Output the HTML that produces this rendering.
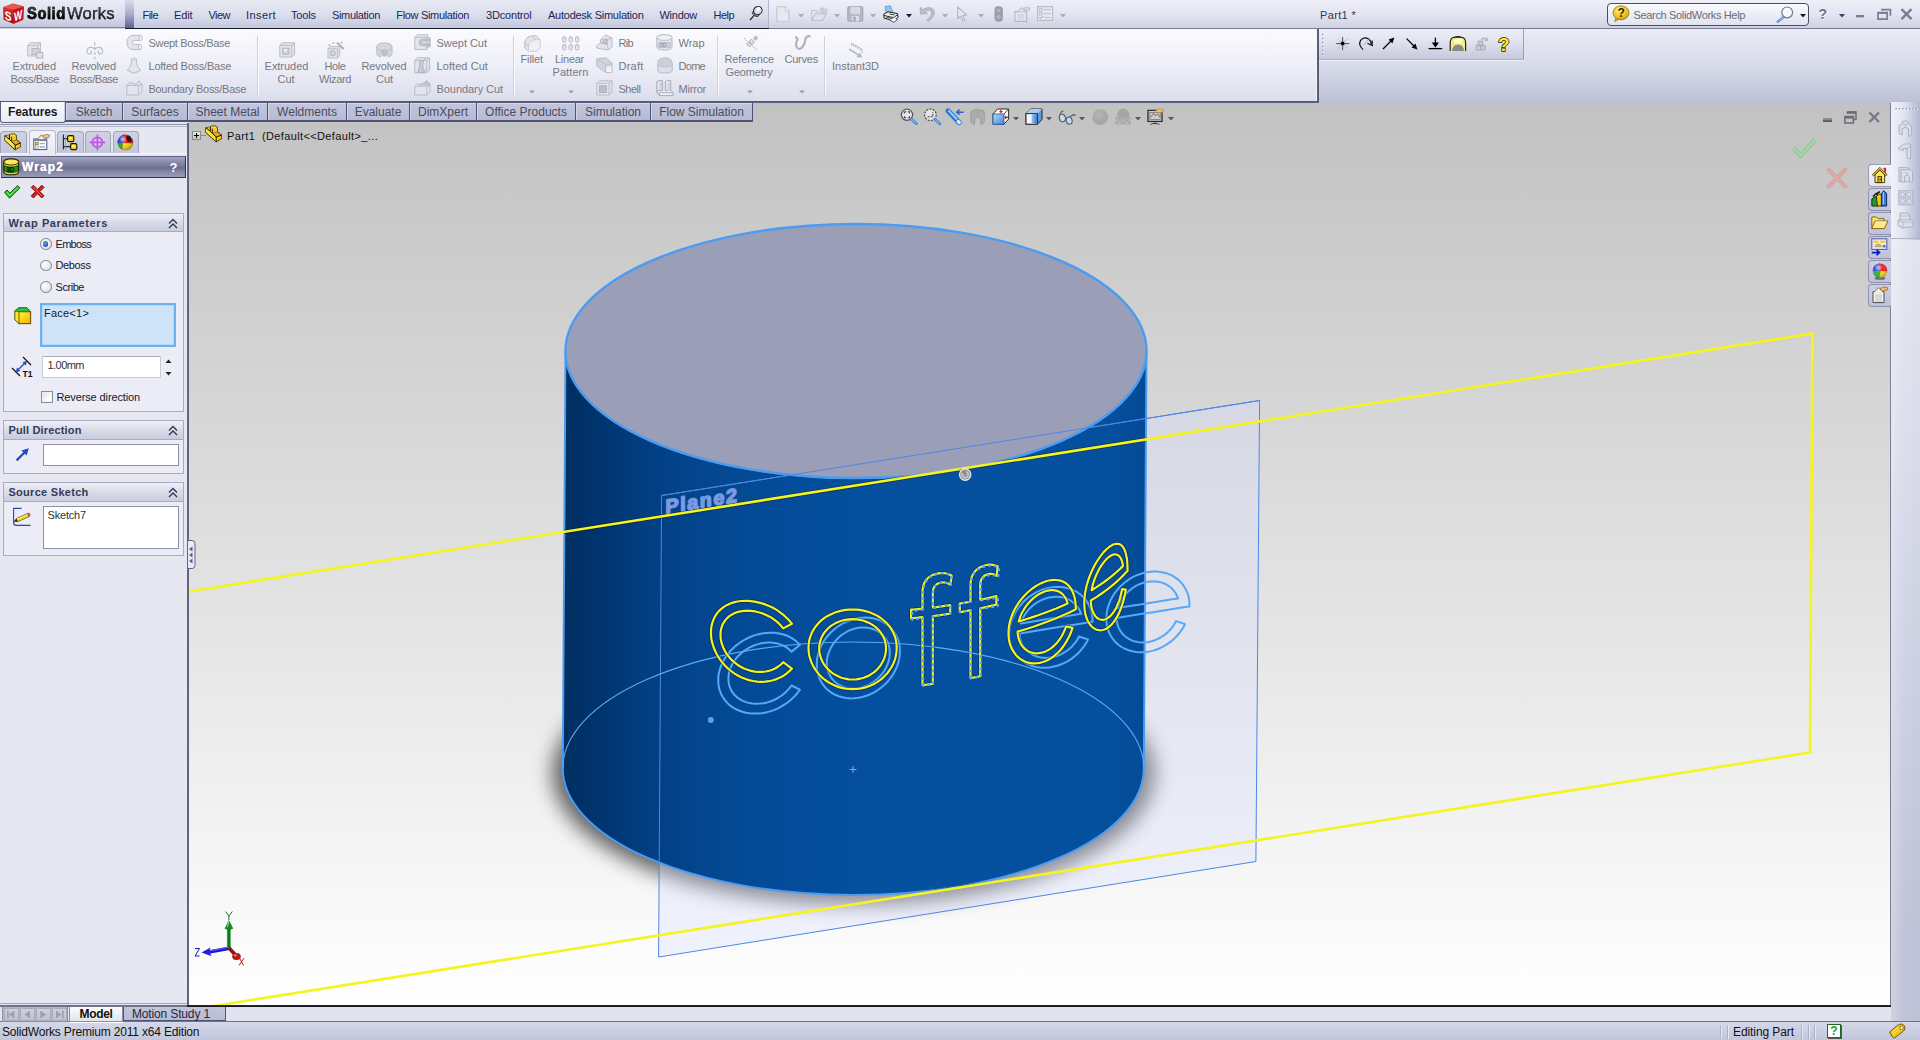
<!DOCTYPE html>
<html><head><meta charset="utf-8"><title>SolidWorks</title>
<style>
*{box-sizing:border-box;margin:0;padding:0}
html,body{width:1920px;height:1040px;overflow:hidden;background:#dfe1ee;font-family:"Liberation Sans",sans-serif;font-size:11px;color:#1c2450}
.a{position:absolute;white-space:nowrap}
#title{left:0;top:0;width:1920px;height:29px;background:linear-gradient(#eceef7,#e3e5f1 45%,#cfd2e3)}
#logo{left:0;top:0;width:125px;height:28px;background:linear-gradient(#e9ebf5,#dcdfed 50%,#c4c8dc);border-bottom:1px solid #7f8298}
#sep{left:125px;top:0;width:9px;height:28px;background:linear-gradient(#d9dbeb,#a9accb 50%,#5f6291)}
#menu{left:134px;top:0;width:635px;height:29px;background:linear-gradient(#e8eaf4,#dcdfed 50%,#c3c7db);border-bottom:1px solid #14162a;border-right:1px solid #b4b7cc}
#menuline{left:125px;top:28px;width:644px;height:1px;background:#14162a}
.mi{top:8px;font-size:11px;color:#1b2455;letter-spacing:-0.1px}
#titleR{left:769px;top:0;width:1151px;height:29px;background:linear-gradient(#eeeff7,#e3e5f1 50%,#cfd2e3);border-bottom:1px solid #777a92}
#cmd{left:0;top:29px;width:1319px;height:73px;background:linear-gradient(#fbfbfe,#f1f2f9 40%,#dcdeed);border-right:2px solid #5c5f73;border-bottom:1px solid #565970;box-shadow:inset -1px 0 0 #f4f5fa}
#cmdR{left:1319px;top:29px;width:601px;height:74px;background:linear-gradient(#e9ebf5,#d9dceb 45%,#bcc0d6)}
.ct{font-size:11px;color:#7a7c86;text-align:center;line-height:13px}
.cs{font-size:11px;color:#70727c}
.vsep{top:36px;width:1px;height:60px;background:#c9cbd9;border-right:1px solid #fff}
#tabrow{left:65px;top:102px;width:1254px;height:1px;background:#55586f}
#tabrowL{left:0;top:103px;width:189px;height:21px;background:#e3e5f0}
.tab{top:102px;height:20px;background:linear-gradient(#c6c9dd,#b4b8d0);border:1px solid #4d5177;border-left:none;font-size:12px;color:#4c4e66;text-align:center;line-height:18px}
#tabF{left:1px;top:102px;width:65px;height:22px;background:linear-gradient(#f4f5fa,#e6e8f2);border:1px solid #6a6d8c;border-top:none;font-weight:bold;font-size:12px;color:#222;text-align:center;line-height:19px;border-radius:0 0 2px 2px}
#left{left:0;top:124px;width:187px;height:882px;background:#e6e7f1}
#split{left:187px;top:123px;width:2px;height:883px;background:#62657f}
#vp{left:189px;top:103px}
#right{left:1891px;top:102px;width:29px;height:920px;background:linear-gradient(90deg,#eef0f8,#dde0ee 50%,#b9bdd3)}
#btabs{left:0;top:1006px;width:1891px;height:16px;background:#e1e3ee}
#status{left:0;top:1021px;width:1920px;height:19px;background:linear-gradient(#d5d8e8,#c2c6db);border-top:1px solid #6f7289;font-size:12px;color:#111}
</style></head><body>
<div id="title" class="a"></div>
<div id="titleR" class="a"></div>
<div id="logo" class="a"></div>
<div id="sep" class="a"></div>
<div id="menu" class="a"></div>
<div id="menuline" class="a"></div>
<div class="a" style="left:142.5px;top:9.5px;font-size:11px;line-height:11px;color:#1b2558;letter-spacing:-0.56px;">File</div>
<div class="a" style="left:174.0px;top:9.5px;font-size:11px;line-height:11px;color:#1b2558;letter-spacing:-0.12px;">Edit</div>
<div class="a" style="left:208.5px;top:9.5px;font-size:11px;line-height:11px;color:#1b2558;letter-spacing:-0.54px;">View</div>
<div class="a" style="left:246.0px;top:9.5px;font-size:11px;line-height:11px;color:#1b2558;letter-spacing:0.43px;">Insert</div>
<div class="a" style="left:291.0px;top:9.5px;font-size:11px;line-height:11px;color:#1b2558;letter-spacing:-0.14px;">Tools</div>
<div class="a" style="left:332.0px;top:9.5px;font-size:11px;line-height:11px;color:#1b2558;letter-spacing:-0.34px;">Simulation</div>
<div class="a" style="left:396.3px;top:9.5px;font-size:11px;line-height:11px;color:#1b2558;letter-spacing:-0.33px;">Flow Simulation</div>
<div class="a" style="left:486.0px;top:9.5px;font-size:11px;line-height:11px;color:#1b2558;letter-spacing:-0.18px;">3Dcontrol</div>
<div class="a" style="left:548.0px;top:9.5px;font-size:11px;line-height:11px;color:#1b2558;letter-spacing:-0.25px;">Autodesk Simulation</div>
<div class="a" style="left:659.5px;top:9.5px;font-size:11px;line-height:11px;color:#1b2558;letter-spacing:-0.27px;">Window</div>
<div class="a" style="left:713.5px;top:9.5px;font-size:11px;line-height:11px;color:#1b2558;letter-spacing:-0.53px;">Help</div>
<div class="a" style="left:1320.0px;top:9.5px;font-size:11px;line-height:11px;color:#33364a;letter-spacing:0.34px;">Part1 *</div>
<div class="a" style="left:27px;top:4.4px;font-size:17px;line-height:19px;font-weight:bold;letter-spacing:0.6px;transform:scaleX(0.87);transform-origin:0 0;background:linear-gradient(#5a5a5a,#000 70%);-webkit-background-clip:text;background-clip:text;color:transparent;-webkit-text-stroke:0.5px #111">Solid</div>
<div class="a" style="left:67px;top:4.4px;font-size:17px;line-height:19px;letter-spacing:0.2px;transform:scaleX(0.98);transform-origin:0 0;background:linear-gradient(#666,#111 75%);-webkit-background-clip:text;background-clip:text;color:transparent;-webkit-text-stroke:0.25px #222">Works</div>
<div class="a" style="left:1607px;top:3px;width:202px;height:23px;border:1px solid #4b4d5e;border-radius:4px;background:linear-gradient(#fbfbfd,#eceef6 50%,#e1e4f0)"></div>
<div class="a" style="left:1633.5px;top:9.6px;font-size:11px;line-height:11px;color:#6a6c78;letter-spacing:-0.34px;">Search SolidWorks Help</div>
<svg class="a" style="left:3px;top:3px;overflow:visible" width="21" height="21" viewBox="0 0 21 21" ><defs><linearGradient id="lg1" x1="0" y1="0" x2="0" y2="1"><stop offset="0" stop-color="#e8322c"/><stop offset="1" stop-color="#a50f0f"/></linearGradient></defs>
<path d="M0.5 4.4 L10 0.9 L20.5 3.8 L20 16.5 L10.5 20.5 L1 16.5Z" fill="url(#lg1)" stroke="#8a1010" stroke-width="0.6"/>
<path d="M0.5 4.4 L10 0.9 L20.5 3.8 L10.5 6.8Z" fill="#f0544e"/>
<path d="M10.5 6.8 L20.5 3.8 L20 16.5 L10.5 20.5Z" fill="#c01616"/>
<text x="0" y="0" font-family="Liberation Sans" font-weight="bold" font-size="12.5" fill="#fff" transform="matrix(0.82 0.27 0 1 1.7 16.2)">S</text>
<text x="0" y="0" font-family="Liberation Sans" font-weight="bold" font-size="12.5" fill="#fff" transform="matrix(0.7 -0.27 0 1 10.9 18.6)">W</text></svg>
<svg class="a" style="left:749px;top:5px;overflow:visible" width="14" height="16" viewBox="0 0 14 16" ><path d="M1 15 L5.6 9.8" stroke="#222" stroke-width="1.2"/><path d="M3.2 7.6 Q4.6 11.6 9 11.4 L10.4 9.4 L5 5.4Z" fill="#b9bac2" stroke="#26262e" stroke-width="1"/><ellipse cx="8.8" cy="5.6" rx="4.4" ry="4" fill="#dcdde3" stroke="#26262e" stroke-width="1.1" transform="rotate(-35 8.8 5.6)"/><ellipse cx="9.6" cy="4.2" rx="2.2" ry="1.6" fill="#fff" transform="rotate(-35 9.6 4.2)"/></svg>
<svg class="a" style="left:776px;top:6px;overflow:visible" width="14" height="16" viewBox="0 0 14 16" ><path d="M0.8 0.8h8.2l4 4v10.4h-12.2z" fill="#e8e9f0" stroke="#c3c5d2" stroke-width="1.1"/><path d="M9 0.8v4h4" fill="#f6f6fa" stroke="#c3c5d2" stroke-width="1"/></svg>
<svg class="a" style="left:798px;top:14px;overflow:visible" width="6" height="4" viewBox="0 0 6 4" ><path d="M0 0h6l-3 3.4z" fill="#a9abba"/></svg>
<svg class="a" style="left:811px;top:5px;overflow:visible" width="17" height="17" viewBox="0 0 17 17" ><path d="M0.8 15.5V5.5h4l1.5 1.5h5v2" fill="#e8e9f0" stroke="#bfc1cf" stroke-width="1.1"/><path d="M0.8 15.5L4 8.7h11.3l-3.6 6.8z" fill="#dfe0ea" stroke="#bfc1cf" stroke-width="1.1"/><path d="M8.5 4.5q3-3.5 6 0.2l1.5-1v4.6h-4.6l1.6-1.6q-1.8-2.4-3.6-1" fill="#d0d2de" stroke="#bfc1cf" stroke-width="0.8"/></svg>
<svg class="a" style="left:834px;top:14px;overflow:visible" width="6" height="4" viewBox="0 0 6 4" ><path d="M0 0h6l-3 3.4z" fill="#a9abba"/></svg>
<svg class="a" style="left:847px;top:6px;overflow:visible" width="17" height="16" viewBox="0 0 17 16" ><rect x="0.8" y="0.8" width="15" height="14.4" rx="1" fill="#b5b7c4" stroke="#9fa1b0" stroke-width="1"/><rect x="3.6" y="1.2" width="9.4" height="6.6" fill="#e4e5ec"/><path d="M4.5 3h7.6M4.5 4.8h7.6M4.5 6.4h7.6" stroke="#c3c5d0" stroke-width="0.7"/><rect x="4.8" y="9.8" width="7.2" height="5.4" fill="#dcdde6"/><rect x="6.2" y="10.8" width="2.6" height="4.4" fill="#a7a9b7"/></svg>
<svg class="a" style="left:870px;top:14px;overflow:visible" width="6" height="4" viewBox="0 0 6 4" ><path d="M0 0h6l-3 3.4z" fill="#a9abba"/></svg>
<svg class="a" style="left:883px;top:5px;overflow:visible" width="16" height="18" viewBox="0 0 16 18" ><path d="M3 7.5 L2 1.5 L7.6 0.8 L9.8 7" fill="#8fc3f0" stroke="#5a9bd8" stroke-width="0.8"/><path d="M0.8 9.2 L5 6.8 L14.4 8.6 L15.2 12.2 L10.6 15.6 L1.2 13.2Z" fill="#f2f2f2" stroke="#1a1a1a" stroke-width="1"/><path d="M1 10.5 L10.5 12.6 L15 9.4" fill="none" stroke="#1a1a1a" stroke-width="0.9"/><path d="M3.4 12.2 L9.6 13.6" stroke="#555" stroke-width="1.1"/><path d="M6.5 9 l5 1" stroke="#444" stroke-width="1.2"/><path d="M6 14.6 L10.8 17.2 L14.6 14.6 L13 13.6" fill="#fff" stroke="#333" stroke-width="0.8"/></svg>
<svg class="a" style="left:906px;top:14px;overflow:visible" width="6" height="4" viewBox="0 0 6 4" ><path d="M0 0h6l-3 3.4z" fill="#1a1c3e"/></svg>
<svg class="a" style="left:919px;top:6px;overflow:visible" width="17" height="16" viewBox="0 0 17 16" ><path d="M1 1.2 L1.6 8.2 L8.6 7.6 L6.2 5.6 Q10.5 2.6 12.2 6.2 Q13.2 9.6 7.6 14.2 L9.4 15.6 Q17 9.8 15 4.6 Q12 -1.2 3.6 3.6Z" fill="#bcbecb" stroke="#a9abb9" stroke-width="0.8"/></svg>
<svg class="a" style="left:942px;top:14px;overflow:visible" width="6" height="4" viewBox="0 0 6 4" ><path d="M0 0h6l-3 3.4z" fill="#a9abba"/></svg>
<svg class="a" style="left:957px;top:6px;overflow:visible" width="11" height="16" viewBox="0 0 11 16" ><path d="M0.8 0.8 L0.8 12.6 L3.6 10 L6 15.2 L8 14.3 L5.6 9.2 L9.6 9.2Z" fill="#e9eaf1" stroke="#b0b2c1" stroke-width="1.1" stroke-linejoin="round"/></svg>
<svg class="a" style="left:978px;top:14px;overflow:visible" width="6" height="4" viewBox="0 0 6 4" ><path d="M0 0h6l-3 3.4z" fill="#a9abba"/></svg>
<svg class="a" style="left:994px;top:6px;overflow:visible" width="10" height="16" viewBox="0 0 10 16" ><rect x="0.5" y="0.3" width="8.4" height="15.4" rx="3.6" fill="#9b9da9"/><circle cx="4.7" cy="4.4" r="2" fill="#b3b5c0"/><circle cx="4.7" cy="10.8" r="2" fill="#b3b5c0"/></svg>
<svg class="a" style="left:1014px;top:6px;overflow:visible" width="17" height="16" viewBox="0 0 17 16" ><path d="M1 5.6h11.6v9.8H1z" fill="#e5e6ee" stroke="#b3b5c3" stroke-width="1.1"/><path d="M3.2 9h7.2M3.2 11h7.2M3.2 13h7.2" stroke="#c0c2ce" stroke-width="0.8"/><path d="M4 6 L7.6 1.4 L11.6 5.6" fill="#d9dae3" stroke="#b3b5c3" stroke-width="0.9"/><path d="M9.5 2.4 q3-2.6 6.4-0.6 l-0.4 2.6 q-2-1-3.6 0.6z" fill="#d2d3de" stroke="#b9bbc8" stroke-width="0.7"/></svg>
<svg class="a" style="left:1037px;top:6px;overflow:visible" width="17" height="15" viewBox="0 0 17 15" ><rect x="0.6" y="0.6" width="15" height="13.8" fill="#e6e7ef" stroke="#b7b9c6" stroke-width="1.1"/><rect x="2.6" y="2.6" width="2.4" height="2.4" fill="none" stroke="#b7b9c6" stroke-width="0.8"/><rect x="2.6" y="6.6" width="2.4" height="2.4" fill="none" stroke="#b7b9c6" stroke-width="0.8"/><path d="M6.6 3.6h7M6.6 7.8h7M7.6 11.6h6" stroke="#b7b9c6" stroke-width="0.9"/><path d="M2.4 11l1.4 1.5 2.6-2.6" fill="none" stroke="#9d9fae" stroke-width="1"/></svg>
<svg class="a" style="left:1060px;top:14px;overflow:visible" width="6" height="4" viewBox="0 0 6 4" ><path d="M0 0h6l-3 3.4z" fill="#a9abba"/></svg>
<svg class="a" style="left:1612px;top:5px;overflow:visible" width="18" height="18" viewBox="0 0 18 18" ><defs><radialGradient id="qg" cx="0.4" cy="0.3" r="0.8"><stop offset="0" stop-color="#fff27a"/><stop offset="0.6" stop-color="#f1c01e"/><stop offset="1" stop-color="#c98f0a"/></radialGradient></defs>
<path d="M3.6 13.2 L2.6 16.6 L6.8 14.4" fill="#e0a814" stroke="#8a6208" stroke-width="0.6"/><ellipse cx="9" cy="7.8" rx="8" ry="7" fill="url(#qg)" stroke="#9a6f08" stroke-width="0.8"/>
<text x="5.4" y="12.2" font-family="Liberation Sans" font-weight="bold" font-size="12" fill="#2a2410">?</text></svg>
<svg class="a" style="left:1776px;top:6px;overflow:visible" width="19" height="17" viewBox="0 0 19 17" ><path d="M8 10.8 L2 15.6" stroke="#5a8fc8" stroke-width="2.6" stroke-linecap="round"/><path d="M8 10.8 L2.4 15.2" stroke="#a9cdf0" stroke-width="0.9"/><circle cx="11.2" cy="6.4" r="5.4" fill="#f4f7fc" stroke="#6f7a8c" stroke-width="1.2"/><path d="M7.6 5.6 a3.8 3.8 0 0 1 5.2-2.6" fill="none" stroke="#fff" stroke-width="1.4"/></svg>
<svg class="a" style="left:1800px;top:14px;overflow:visible" width="6" height="4" viewBox="0 0 6 4" ><path d="M0 0h6l-3 3.4z" fill="#16182e"/></svg>
<div class="a" style="left:1818.5px;top:6px;font-size:14px;line-height:16px;font-weight:bold;color:#71738a;text-shadow:0.5px 0.5px 0 #fff">?</div>
<svg class="a" style="left:1839px;top:13.5px;overflow:visible" width="6" height="4" viewBox="0 0 6 4" ><path d="M0 0h6l-3 3.4z" fill="#3c3e5a"/></svg>
<svg class="a" style="left:1855px;top:8px;overflow:visible" width="60" height="14" viewBox="0 0 60 14" ><g fill="none" stroke="#7b7d95" stroke-width="2"><path d="M1 8.2h8" stroke-width="2.4"/><path d="M26 1.6h9.4v6.2 M23 4.6h9.2v6.6h-9.2z M23 5.2h9.2" stroke-width="1.7"/><path d="M46.5 1.2 l10 10 M56.5 1.2 l-10 10" stroke-width="2.4"/></g></svg>
<div id="cmd" class="a"></div>
<div id="cmdR" class="a"></div>
<div class="a" style="left:12.5px;top:60.9px;font-size:11px;line-height:11px;color:#777982;letter-spacing:-0.07px;">Extruded</div>
<div class="a" style="left:10.5px;top:73.9px;font-size:11px;line-height:11px;color:#777982;letter-spacing:-0.45px;">Boss/Base</div>
<div class="a" style="left:71.5px;top:60.9px;font-size:11px;line-height:11px;color:#777982;letter-spacing:-0.17px;">Revolved</div>
<div class="a" style="left:69.5px;top:73.9px;font-size:11px;line-height:11px;color:#777982;letter-spacing:-0.45px;">Boss/Base</div>
<div class="a" style="left:264.6px;top:60.9px;font-size:11px;line-height:11px;color:#777982;letter-spacing:-0.04px;">Extruded</div>
<div class="a" style="left:277.5px;top:73.9px;font-size:11px;line-height:11px;color:#777982;letter-spacing:-0.04px;">Cut</div>
<div class="a" style="left:324.5px;top:60.9px;font-size:11px;line-height:11px;color:#777982;letter-spacing:-0.41px;">Hole</div>
<div class="a" style="left:319.0px;top:73.9px;font-size:11px;line-height:11px;color:#777982;letter-spacing:-0.37px;">Wizard</div>
<div class="a" style="left:361.5px;top:60.9px;font-size:11px;line-height:11px;color:#777982;letter-spacing:-0.11px;">Revolved</div>
<div class="a" style="left:376.0px;top:73.9px;font-size:11px;line-height:11px;color:#777982;letter-spacing:-0.04px;">Cut</div>
<div class="a" style="left:520.5px;top:54.2px;font-size:11px;line-height:11px;color:#777982;letter-spacing:-0.12px;">Fillet</div>
<div class="a" style="left:555.0px;top:54.2px;font-size:11px;line-height:11px;color:#777982;letter-spacing:-0.26px;">Linear</div>
<div class="a" style="left:552.5px;top:67.0px;font-size:11px;line-height:11px;color:#777982;letter-spacing:0.08px;">Pattern</div>
<div class="a" style="left:724.5px;top:54.2px;font-size:11px;line-height:11px;color:#777982;letter-spacing:-0.14px;">Reference</div>
<div class="a" style="left:725.5px;top:67.0px;font-size:11px;line-height:11px;color:#777982;letter-spacing:-0.16px;">Geometry</div>
<div class="a" style="left:784.5px;top:54.2px;font-size:11px;line-height:11px;color:#777982;letter-spacing:-0.22px;">Curves</div>
<div class="a" style="left:832.0px;top:61.1px;font-size:11px;line-height:11px;color:#777982;letter-spacing:-0.01px;">Instant3D</div>
<div class="a" style="left:148.5px;top:37.9px;font-size:11px;line-height:11px;color:#777982;letter-spacing:-0.31px;">Swept Boss/Base</div>
<div class="a" style="left:148.5px;top:60.9px;font-size:11px;line-height:11px;color:#777982;letter-spacing:-0.23px;">Lofted Boss/Base</div>
<div class="a" style="left:148.5px;top:83.9px;font-size:11px;line-height:11px;color:#777982;letter-spacing:-0.29px;">Boundary Boss/Base</div>
<div class="a" style="left:436.5px;top:37.9px;font-size:11px;line-height:11px;color:#777982;letter-spacing:-0.03px;">Swept Cut</div>
<div class="a" style="left:436.5px;top:60.9px;font-size:11px;line-height:11px;color:#777982;letter-spacing:0.07px;">Lofted Cut</div>
<div class="a" style="left:436.5px;top:83.9px;font-size:11px;line-height:11px;color:#777982;letter-spacing:-0.06px;">Boundary Cut</div>
<div class="a" style="left:618.5px;top:37.9px;font-size:11px;line-height:11px;color:#777982;letter-spacing:-0.67px;">Rib</div>
<div class="a" style="left:618.5px;top:60.9px;font-size:11px;line-height:11px;color:#777982;letter-spacing:0.23px;">Draft</div>
<div class="a" style="left:618.5px;top:83.9px;font-size:11px;line-height:11px;color:#777982;letter-spacing:-0.49px;">Shell</div>
<div class="a" style="left:678.5px;top:37.9px;font-size:11px;line-height:11px;color:#777982;letter-spacing:-0.02px;">Wrap</div>
<div class="a" style="left:678.5px;top:60.9px;font-size:11px;line-height:11px;color:#777982;letter-spacing:-0.71px;">Dome</div>
<div class="a" style="left:678.5px;top:83.9px;font-size:11px;line-height:11px;color:#777982;letter-spacing:-0.20px;">Mirror</div>
<div class="a" style="left:257px;top:36px;width:2px;height:60px;background:linear-gradient(90deg,#cfd1de 50%,#fbfbfe 50%)"></div>
<div class="a" style="left:513px;top:36px;width:2px;height:60px;background:linear-gradient(90deg,#cfd1de 50%,#fbfbfe 50%)"></div>
<div class="a" style="left:717px;top:36px;width:2px;height:60px;background:linear-gradient(90deg,#cfd1de 50%,#fbfbfe 50%)"></div>
<div class="a" style="left:824px;top:36px;width:2px;height:60px;background:linear-gradient(90deg,#cfd1de 50%,#fbfbfe 50%)"></div>
<svg class="a" style="left:529px;top:90px" width="6" height="4" viewBox="0 0 6 4"><path d="M0 0.5h6l-3 3z" fill="#9b9da8"/></svg>
<svg class="a" style="left:568px;top:90px" width="6" height="4" viewBox="0 0 6 4"><path d="M0 0.5h6l-3 3z" fill="#9b9da8"/></svg>
<svg class="a" style="left:747px;top:90px" width="6" height="4" viewBox="0 0 6 4"><path d="M0 0.5h6l-3 3z" fill="#9b9da8"/></svg>
<svg class="a" style="left:799px;top:90px" width="6" height="4" viewBox="0 0 6 4"><path d="M0 0.5h6l-3 3z" fill="#9b9da8"/></svg>
<svg class="a" style="left:27px;top:42px;overflow:visible" width="17" height="17" viewBox="0 0 17 17" ><path d="M0.8 3.4 L3.6 0.8 H13.6 V11.4 L10.8 14 H0.8Z" fill="#e4e5ec" stroke="#b9bbc7" stroke-width="1"/><path d="M0.8 3.4H10.8V14M10.8 3.4L13.6 0.8" fill="none" stroke="#b9bbc7" stroke-width="1"/><rect x="5" y="6.6" width="7" height="6" fill="#d3d4de" stroke="#aeb0bd" stroke-width="0.9"/><rect x="9.4" y="10.4" width="6.4" height="5.6" fill="#dddee6" stroke="#aeb0bd" stroke-width="0.9"/></svg>
<svg class="a" style="left:86px;top:42px;overflow:visible" width="18" height="18" viewBox="0 0 18 18" ><path d="M8.8 0.5v3M8.8 5v3.4M8.8 10v3M8.8 14.6v2.6" stroke="#a9abb8" stroke-width="1"/><path d="M1 9.6 Q1 5.4 5 5.4 Q7 5.4 8.8 7 Q10.6 5.4 12.6 5.4 Q16.6 5.4 16.6 9.6 Q16.6 12 14 12 Q12 12 12 10 Q12 8.8 13.4 8.8" fill="none" stroke="#b9bbc7" stroke-width="1.1"/><path d="M1 9.6 Q1 12 3.6 12 Q5.6 12 5.6 10 Q5.6 8.8 4.2 8.8" fill="none" stroke="#b9bbc7" stroke-width="1.1"/></svg>
<svg class="a" style="left:126px;top:34px;overflow:visible" width="17" height="17" viewBox="0 0 17 17" ><path d="M15 1.4 H8 Q1 1.4 1 8.4 Q1 15.6 8 15.6 H14 V10.6 H8.6 Q6.4 10.6 6.4 8.4 Q6.4 6.4 8.6 6.4 H15Z" fill="#e4e5ec" stroke="#b9bbc7" stroke-width="1"/><ellipse cx="14.6" cy="3.9" rx="1.6" ry="2.5" fill="#f3f3f7" stroke="#b9bbc7" stroke-width="0.9"/><ellipse cx="14" cy="13.1" rx="1.6" ry="2.5" fill="#f3f3f7" stroke="#b9bbc7" stroke-width="0.9"/></svg>
<svg class="a" style="left:126px;top:57px;overflow:visible" width="16" height="17" viewBox="0 0 16 17" ><path d="M5.6 2 Q8 0.4 10.4 2 L10.8 7 Q11.4 11 14.8 13.2 L8 16.4 L1.2 13.2 Q4.6 11 5.2 7Z" fill="#e4e5ec" stroke="#b9bbc7" stroke-width="1"/><ellipse cx="8" cy="2.2" rx="2.4" ry="1" fill="#f4f4f8" stroke="#b9bbc7" stroke-width="0.8"/></svg>
<svg class="a" style="left:126px;top:80px;overflow:visible" width="17" height="16" viewBox="0 0 17 16" ><path d="M0.8 5.4 L4.4 2.4 L10 4.6 L13 1 L16 4.4 V12 L12.4 15 H0.8Z" fill="#e4e5ec" stroke="#b9bbc7" stroke-width="1"/><path d="M0.8 5.4 H12.4 V15 M12.4 5.4 L16 4.4" fill="none" stroke="#b9bbc7" stroke-width="1"/></svg>
<svg class="a" style="left:279px;top:42px;overflow:visible" width="17" height="17" viewBox="0 0 17 17" ><path d="M0.8 3.4 L3.6 0.8 H15.6 V12.4 L12.8 15 H0.8Z" fill="#e4e5ec" stroke="#b9bbc7" stroke-width="1"/><path d="M0.8 3.4H12.8V15M12.8 3.4L15.6 0.8" fill="none" stroke="#b9bbc7" stroke-width="1"/><rect x="3.8" y="6.2" width="6.2" height="6" fill="#d3d4de" stroke="#aeb0bd" stroke-width="0.9"/><rect x="5" y="7.2" width="2.6" height="2" fill="#f8f8fb"/></svg>
<svg class="a" style="left:327px;top:41px;overflow:visible" width="18" height="18" viewBox="0 0 18 18" ><path d="M1 7.8 L3.4 5.6 H12.6 V14.8 L10.4 17 H1Z" fill="#e4e5ec" stroke="#b9bbc7" stroke-width="1"/><path d="M1 7.8H10.4V17" fill="none" stroke="#b9bbc7" stroke-width="1"/><circle cx="5.8" cy="12.4" r="2.6" fill="#d3d4de" stroke="#aaacba" stroke-width="0.9"/><path d="M10 1.6 L16.6 8" stroke="#a3a5b3" stroke-width="2"/><path d="M10 1.6 L16.6 8" stroke="#d9dae2" stroke-width="0.6" stroke-dasharray="1 1"/><path d="M2.4 3.2v2M1.4 4.2h2M6.4 1v2M5.4 2h2M14.5 0.6v2M13.5 1.6h2" stroke="#a9abb8" stroke-width="0.8"/></svg>
<svg class="a" style="left:376px;top:42px;overflow:visible" width="17" height="17" viewBox="0 0 17 17" ><path d="M0.8 5 Q0.8 1 8.4 1 Q16 1 16 5 V11.6 Q16 14 12.4 15 L11.4 9.4 L8.4 7.4 L5.4 9.4 L4.4 15 Q0.8 14 0.8 11.6Z" fill="#d5d6df" stroke="#b9bbc7" stroke-width="1"/><path d="M0.8 5 Q0.8 8.6 8.4 8.6 Q16 8.6 16 5" fill="none" stroke="#b9bbc7" stroke-width="0.9"/><path d="M5.4 9.4 L8.4 7.4 L11.4 9.4 L10.6 14.4 H6.2Z" fill="#bdbfcb"/></svg>
<svg class="a" style="left:414px;top:34px;overflow:visible" width="17" height="17" viewBox="0 0 17 17" ><path d="M0.8 3.4 L3.6 0.8 H13.6 V3.6 H16 V13 H13.4 L12.6 15.6 H0.8Z" fill="#e4e5ec" stroke="#b9bbc7" stroke-width="1"/><path d="M0.8 3.4H12.6V15.6" fill="none" stroke="#b9bbc7" stroke-width="0.9"/><path d="M16 5.2 H9 Q5 5.2 5 8.4 Q5 11.6 9 11.6 H16 V9.8 H9.4 Q7.6 9.8 7.6 8.4 Q7.6 7 9.4 7 H16Z" fill="#c9cbd6" stroke="#a9abb9" stroke-width="0.8"/></svg>
<svg class="a" style="left:414px;top:57px;overflow:visible" width="17" height="17" viewBox="0 0 17 17" ><path d="M0.8 3.4 L3.6 0.8 H15.6 V13 L12.8 15.8 H0.8Z" fill="#e4e5ec" stroke="#b9bbc7" stroke-width="1"/><path d="M0.8 3.4H12.8V15.8M12.8 3.4L15.6 0.8" fill="none" stroke="#b9bbc7" stroke-width="0.9"/><path d="M5.6 3.6 Q6.6 9 3.6 15.6 H10.4 Q7.8 9 9.2 3.6Z" fill="#c9cbd6" stroke="#a9abb9" stroke-width="0.8"/><path d="M9.2 3.6 L12.2 1 M10.4 15.6 L12.6 11" stroke="#a9abb9" stroke-width="0.8"/></svg>
<svg class="a" style="left:414px;top:80px;overflow:visible" width="17" height="16" viewBox="0 0 17 16" ><path d="M0.8 6.4 L3.6 3.8 L9 5 L12.6 0.8 L16 4.6 V12 L12.8 15 H0.8Z" fill="#e4e5ec" stroke="#b9bbc7" stroke-width="1"/><path d="M0.8 6.4 H12.8 V15 M12.8 6.4 L16 4.6" fill="none" stroke="#b9bbc7" stroke-width="0.9"/><path d="M5 6.2 L8 3.4 H11.4 L12.6 0.8 L15.6 4.6 L12.8 6.4" fill="#c9cbd6" stroke="#a9abb9" stroke-width="0.8"/></svg>
<svg class="a" style="left:524px;top:35px;overflow:visible" width="17" height="17" viewBox="0 0 17 17" ><path d="M0.8 8 Q1.4 1.4 8.4 0.8 L12.4 0.8 L16 5 V13 L12.6 16 H4.6 L0.8 13Z" fill="#e4e5ec" stroke="#b9bbc7" stroke-width="1"/><path d="M4.6 16 V11 Q5 5.6 11 5 L16 5 M4.6 11 L0.8 8 M11 5 L8.4 0.8" fill="none" stroke="#b9bbc7" stroke-width="0.9"/><path d="M4.6 16 V11 Q5 5.6 11 5 L16 5 V13 L12.6 16Z" fill="#f2f2f6" opacity="0.7"/></svg>
<svg class="a" style="left:562px;top:36px;overflow:visible" width="18" height="15" viewBox="0 0 18 15" ><rect x="0.6" y="0.6" width="3.4" height="5.6" rx="1.6" fill="#e9eaf0" stroke="#aeb0bd" stroke-width="0.9"/><ellipse cx="2.3" cy="2.0" rx="1.4" ry="0.8" fill="#cfd0da"/><rect x="7" y="0.6" width="3.4" height="5.6" rx="1.6" fill="#e9eaf0" stroke="#aeb0bd" stroke-width="0.9"/><ellipse cx="8.7" cy="2.0" rx="1.4" ry="0.8" fill="#cfd0da"/><rect x="13.4" y="0.6" width="3.4" height="5.6" rx="1.6" fill="#e9eaf0" stroke="#aeb0bd" stroke-width="0.9"/><ellipse cx="15.1" cy="2.0" rx="1.4" ry="0.8" fill="#cfd0da"/><rect x="0.6" y="8.4" width="3.4" height="5.6" rx="1.6" fill="#e9eaf0" stroke="#aeb0bd" stroke-width="0.9"/><ellipse cx="2.3" cy="9.8" rx="1.4" ry="0.8" fill="#cfd0da"/><rect x="7" y="8.4" width="3.4" height="5.6" rx="1.6" fill="#e9eaf0" stroke="#aeb0bd" stroke-width="0.9"/><ellipse cx="8.7" cy="9.8" rx="1.4" ry="0.8" fill="#cfd0da"/><rect x="13.4" y="8.4" width="3.4" height="5.6" rx="1.6" fill="#e9eaf0" stroke="#aeb0bd" stroke-width="0.9"/><ellipse cx="15.1" cy="9.8" rx="1.4" ry="0.8" fill="#cfd0da"/></svg>
<svg class="a" style="left:596px;top:34px;overflow:visible" width="17" height="17" viewBox="0 0 17 17" ><path d="M0.8 11.6 L4.4 9 V6 L9.6 1 L16 4 V13 L12 16 L0.8 14Z" fill="#e4e5ec" stroke="#b9bbc7" stroke-width="1"/><path d="M4.4 9 L11.4 10.4 L12 16 M11.4 10.4 L11.4 5.4 L16 4 M4.4 6 L11.4 5.4" fill="none" stroke="#b9bbc7" stroke-width="0.9"/><path d="M5.6 8.8 L10.4 4.6 V9.8Z" fill="#c7c9d4" stroke="#a9abb9" stroke-width="0.8"/></svg>
<svg class="a" style="left:596px;top:57px;overflow:visible" width="17" height="17" viewBox="0 0 17 17" ><path d="M0.8 2 L10 0.8 L16 6 V15.4 H9.6 L0.8 9Z" fill="#d4d5de" stroke="#b9bbc7" stroke-width="1"/><path d="M0.8 2 L9.6 7.2 H16 M9.6 7.2 V15.4" fill="none" stroke="#b9bbc7" stroke-width="0.9"/><rect x="10.4" y="9.6" width="5" height="5.4" fill="#f4f4f8"/></svg>
<svg class="a" style="left:596px;top:80px;overflow:visible" width="17" height="16" viewBox="0 0 17 16" ><path d="M0.8 3.4 L3.8 0.8 H16 V12.2 L13 15 H0.8Z" fill="#e4e5ec" stroke="#b9bbc7" stroke-width="1"/><path d="M0.8 3.4H13V15M13 3.4L16 0.8" fill="none" stroke="#b9bbc7" stroke-width="0.9"/><rect x="3.4" y="5.8" width="7" height="6.8" fill="#bcbeca" stroke="#a7a9b7" stroke-width="0.8"/></svg>
<svg class="a" style="left:656px;top:34px;overflow:visible" width="17" height="17" viewBox="0 0 17 17" ><path d="M0.8 3.6 Q0.8 0.8 8.4 0.8 Q16 0.8 16 3.6 V13 Q16 16 8.4 16 Q0.8 16 0.8 13Z" fill="#e4e5ec" stroke="#b9bbc7" stroke-width="1"/><ellipse cx="8.4" cy="3.6" rx="7.6" ry="2.8" fill="#f1f1f5" stroke="#b9bbc7" stroke-width="0.9"/><path d="M2.6 8.6 H14.2 V13.4 H2.6Z" fill="#cfd0da" stroke="#aeb0bd" stroke-width="0.7"/><text x="3.4" y="12.8" font-family="Liberation Sans" font-weight="bold" font-size="5.6" fill="#9d9fae">3D</text></svg>
<svg class="a" style="left:657px;top:57px;overflow:visible" width="16" height="17" viewBox="0 0 16 17" ><path d="M0.8 6.6 Q0.8 0.8 8 0.8 Q15.2 0.8 15.2 6.6 V13.4 Q15.2 16 8 16 Q0.8 16 0.8 13.4Z" fill="#dddee6" stroke="#b9bbc7" stroke-width="1"/><path d="M0.8 7 Q0.8 9.8 8 9.8 Q15.2 9.8 15.2 7" fill="none" stroke="#b9bbc7" stroke-width="0.9"/><path d="M0.8 6.8 Q0.8 1 8 0.8 Q15.2 1 15.2 6.8 Q15.2 9.6 8 9.6 Q0.8 9.6 0.8 6.8Z" fill="#c9cad5" opacity="0.8"/></svg>
<svg class="a" style="left:656px;top:80px;overflow:visible" width="18" height="17" viewBox="0 0 18 17" ><path d="M0.8 1.6 L3 0.6 H6.4 V10.4 H3 L0.8 12Z" fill="#e4e5ec" stroke="#a9abb9" stroke-width="1"/><path d="M9.4 1.6 L11.4 0.6 H14.8 V10.4 H9.4Z" fill="#e4e5ec" stroke="#a9abb9" stroke-width="1"/><path d="M0.8 12 L3.4 15.6 H17 V12.4 L14.8 10.4" fill="#eeeef3" stroke="#a9abb9" stroke-width="1"/><path d="M3.4 15.6 V12.6 H17" fill="none" stroke="#a9abb9" stroke-width="0.9"/><rect x="3.6" y="3" width="2" height="6" fill="#cfd0da"/><rect x="11.8" y="3" width="2" height="6" fill="#cfd0da"/></svg>
<svg class="a" style="left:741px;top:35px;overflow:visible" width="18" height="17" viewBox="0 0 18 17" ><path d="M3 3 L6.6 6.4 M11.4 11 L16 15.4" stroke="#a3a5b3" stroke-width="1" stroke-dasharray="1.6 1"/><path d="M5.6 9 L10.4 4 L13.4 7.2 L8.6 12Z" fill="#dedfe7" stroke="#aaacba" stroke-width="1"/><path d="M8.4 7.4 l2 2" stroke="#9d9fae" stroke-width="1.2"/><path d="M14.6 0.6v5M12.2 3.1h4.8M12.9 1.3l3.4 3.6M16.3 1.3l-3.4 3.6" stroke="#a3a5b3" stroke-width="0.8"/></svg>
<svg class="a" style="left:794px;top:35px;overflow:visible" width="17" height="17" viewBox="0 0 17 17" ><path d="M15.6 1.2 Q12 1 11.4 4.4 Q10.8 9 8.6 11.8 Q5.6 15.6 3 12.6 Q1 9.6 3 5.6 Q4.2 3.4 2 2.2" fill="none" stroke="#b0b2bf" stroke-width="2.2" stroke-linecap="round"/></svg>
<svg class="a" style="left:848px;top:42px;overflow:visible" width="18" height="17" viewBox="0 0 18 17" ><path d="M3 1 L14 7.2 V11.6" fill="none" stroke="#b5b7c4" stroke-width="1"/><path d="M3.4 1.2v3M5.6 2.4v2.4M7.8 3.6v2.4M10 4.8v2.4M12.2 6v2.4" stroke="#b5b7c4" stroke-width="0.9"/><path d="M1 7 L11 13.4" stroke="#b5b7c4" stroke-width="1.6"/><path d="M8.4 15.2 L14.6 15.6 L11.8 10.6Z" fill="#b5b7c4"/></svg>
<div class="a" style="left:1319px;top:29px;width:204.5px;height:31px;background:linear-gradient(#eceef7,#dfe1ee 45%,#c6c9dd);border-right:1px solid #9c9fb6;border-bottom:1px solid #aeb1c6;box-shadow:0 1px 0 #eef0f7"></div>
<svg class="a" style="left:1322px;top:33px;overflow:visible" width="3" height="24" viewBox="0 0 3 24" ><rect x="0.5" y="1.5" width="1.6" height="1.6" fill="#fff"/><rect x="0" y="0.9" width="1.4" height="1.4" fill="#8f92aa"/><rect x="0.5" y="5.5" width="1.6" height="1.6" fill="#fff"/><rect x="0" y="4.9" width="1.4" height="1.4" fill="#8f92aa"/><rect x="0.5" y="9.5" width="1.6" height="1.6" fill="#fff"/><rect x="0" y="8.9" width="1.4" height="1.4" fill="#8f92aa"/><rect x="0.5" y="13.5" width="1.6" height="1.6" fill="#fff"/><rect x="0" y="12.9" width="1.4" height="1.4" fill="#8f92aa"/><rect x="0.5" y="17.5" width="1.6" height="1.6" fill="#fff"/><rect x="0" y="16.9" width="1.4" height="1.4" fill="#8f92aa"/><rect x="0.5" y="21.5" width="1.6" height="1.6" fill="#fff"/><rect x="0" y="20.9" width="1.4" height="1.4" fill="#8f92aa"/></svg>
<svg class="a" style="left:1335px;top:36px;overflow:visible" width="16" height="16" viewBox="0 0 16 16" ><path d="M7.6 0.6v14M0.6 7.6h14M2.6 2.6l10 10M12.6 2.6l-10 10" stroke="#b5b5bd" stroke-width="0.8"/><path d="M7.6 1.2v12.8M1.2 7.6h12.8" stroke="#44444c" stroke-width="0.9" stroke-dasharray="4.2 4.4"/><circle cx="7.6" cy="7.6" r="2" fill="#000"/></svg>
<svg class="a" style="left:1358px;top:36px;overflow:visible" width="16" height="16" viewBox="0 0 16 16" ><path d="M5 13.6 Q0 9 2.6 4.4 Q5.6 0.4 10 2.6 Q13 4.6 13.6 8.4" fill="none" stroke="#111" stroke-width="1.2"/><path d="M9.4 7.2 L14.2 9.6 L14.2 4.6" fill="none" stroke="#111" stroke-width="1.2"/><path d="M11.6 2.4 L5.4 9" stroke="#999" stroke-width="0.7"/></svg>
<svg class="a" style="left:1382px;top:37px;overflow:visible" width="13" height="13" viewBox="0 0 13 13" ><path d="M1 12 L10 3" stroke="#000" stroke-width="1.3"/><path d="M12.4 0.6 L6.6 2.6 L10.4 6.4Z" fill="#000"/></svg>
<svg class="a" style="left:1405px;top:37px;overflow:visible" width="13" height="13" viewBox="0 0 13 13" ><path d="M1.6 1.6 L10 10" stroke="#000" stroke-width="1.3"/><path d="M12.4 12.4 L6.6 10.4 L10.4 6.6Z" fill="#000"/></svg>
<svg class="a" style="left:1428px;top:37px;overflow:visible" width="15" height="13" viewBox="0 0 15 13" ><path d="M7.4 0.6v8" stroke="#000" stroke-width="1.3"/><path d="M3.8 5.6h7.2l-3.6 5z" fill="#000"/><path d="M0.6 11.6h13.6" stroke="#000" stroke-width="1.3"/></svg>
<svg class="a" style="left:1449px;top:36px;overflow:visible" width="18" height="16" viewBox="0 0 18 16" ><path d="M1.2 15 V7 Q1.2 1.6 5.4 1.2 H12.4 Q16.6 1.6 16.6 7 V15" fill="#f0ee84" stroke="#1a1a1a" stroke-width="1.1"/><path d="M5.4 1.2 Q9 -0.4 12.4 1.2" fill="none" stroke="#1a1a1a" stroke-width="1"/><ellipse cx="9" cy="5" rx="4" ry="2.4" fill="#fbfbc8"/><path d="M3 15 Q3.4 9 9 8.6 Q14.6 9 15 15Z" fill="#8a8a8a"/></svg>
<svg class="a" style="left:1475px;top:36px;overflow:visible" width="14" height="15" viewBox="0 0 14 15" ><path d="M1 9.4h4.6v4.6H1zM5.6 9.4h4.6v4.6H5.6zM3.2 5h4.6v4.4H3.2z" fill="#c9cad5" stroke="#a7a9b8" stroke-width="0.9"/><path d="M5.6 3.4 Q8.6 0 12 2.4 L13 1.4 V5 H9.4 L10.6 3.8 Q8.8 2.2 7 4.2Z" fill="#b3b5c2"/></svg>
<div class="a" style="left:1498px;top:34.5px;font-size:19px;line-height:20px;font-weight:bold;color:#f4f02a;-webkit-text-stroke:1.4px #111;paint-order:stroke fill">?</div>
<svg id="vp" class="a" width="1701" height="903" viewBox="0 0 1701 903">
<defs>
<linearGradient id="bg" x1="0" y1="0" x2="0" y2="1"><stop offset="0" stop-color="#c2c2c2"/><stop offset="0.5" stop-color="#e0e0e0"/><stop offset="1" stop-color="#ffffff"/></linearGradient>
<linearGradient id="cyl" x1="0" y1="0" x2="1" y2="0"><stop offset="0" stop-color="#002e60"/><stop offset="0.06" stop-color="#00346d"/><stop offset="0.13" stop-color="#023d80"/><stop offset="0.235" stop-color="#03468e"/><stop offset="0.37" stop-color="#044c99"/><stop offset="0.58" stop-color="#05509f"/><stop offset="0.92" stop-color="#05509e"/><stop offset="1" stop-color="#044b97"/></linearGradient>
<filter id="blur" x="-20%" y="-20%" width="140%" height="140%"><feGaussianBlur stdDeviation="10"/></filter>
<filter id="blur2" x="-20%" y="-20%" width="140%" height="140%"><feGaussianBlur stdDeviation="0.6"/></filter>
</defs>
<rect width="1701" height="903" fill="url(#bg)"/>
<ellipse cx="664.5" cy="670" rx="301" ry="131" fill="#000" opacity="0.6" filter="url(#blur)"/>
<polygon points="472.6,392.5 1070.6,297.5 1066.9,758.5 469.6,854.0" fill="#d7e1ff" fill-opacity="0.32" stroke="none"/>
<path d="M376.5 248.0 L373.8 665.5 A290.5 126.5 0 0 0 954.8 665.5 L957.5 248.0 A290.5 127 0 0 1 376.5 248.0Z" fill="url(#cyl)" stroke="#4a9cf2" stroke-width="2"/>
<polygon points="472.6,392.5 1070.6,297.5 1066.9,758.5 469.6,854.0" fill="none" stroke="#4f86e6" stroke-width="1"/>
<path d="M373.8 665.5 A290.5 126.5 0 0 1 954.8 665.5" fill="none" stroke="#5aa8f6" stroke-width="1.1"/>
<ellipse cx="667.0" cy="248.0" rx="290.5" ry="127" fill="#9a9eb7" stroke="#4a9cf2" stroke-width="2.4"/>
<line x1="472.6" y1="392.5" x2="1070.6" y2="297.5" stroke="#4f86e6" stroke-width="1"/>
<clipPath id="cb"><path d="M376.5 248.0 L373.8 665.5 A290.5 126.5 0 0 0 954.8 665.5 L957.5 248.0 A290.5 127 0 0 1 376.5 248.0Z"/></clipPath><path d="M0 488.5 L1623.5 230.5 L1621 649.5 L21.5 903.5" fill="none" stroke="#061830" stroke-opacity="0.6" stroke-width="4" clip-path="url(#cb)"/>
<path d="M0 488.5 L1623.5 230.5 L1621 649.5 L21.5 903.5" fill="none" stroke="#f4f41e" stroke-width="2.6" stroke-linejoin="miter"/>
<path d="M660.5 666.5h7M664 663v7" stroke="#6fb0f5" stroke-width="1" fill="none"/>
<circle cx="521.8" cy="617" r="3" fill="#55a2f2"/>
<path d="M610.9 541.9L608.5 539.4L605.8 537.1L602.8 535.1L599.6 533.4L596.1 532.0L592.5 531.0L588.8 530.2L584.9 529.8L580.9 529.7L576.9 529.9L572.8 530.5L568.7 531.4L564.7 532.6L560.8 534.2L557.0 536.0L553.3 538.1L549.8 540.5L546.4 543.1L543.4 545.9L540.5 549.0L538.0 552.2L535.7 555.6L533.8 559.1L532.1 562.6L530.9 566.3L529.9 569.9L529.4 573.6L529.2 577.3L529.4 580.9L529.9 584.4L530.9 587.7L532.1 591.0L533.8 594.0L535.7 596.9L538.0 599.6L540.5 602.0L543.4 604.1L546.4 606.0L549.8 607.5L553.3 608.8L557.0 609.7L560.8 610.3L564.7 610.6L568.7 610.6L572.8 610.2L576.9 609.5L580.9 608.4L584.9 607.1L588.8 605.4L592.5 603.4L596.1 601.2L599.6 598.7L602.8 596.0L605.8 593.1L608.5 590.0L610.9 586.7L602.5 582.5L600.3 585.4L597.8 588.2L595.0 590.7L592.0 593.0L588.8 595.0L585.4 596.8L581.9 598.2L578.3 599.4L574.6 600.2L571.0 600.6L567.3 600.8L563.8 600.6L560.3 600.0L557.0 599.1L553.9 597.9L551.1 596.4L548.5 594.6L546.1 592.5L544.1 590.1L542.4 587.6L541.1 584.8L540.1 581.9L539.6 578.8L539.4 575.7L539.6 572.4L540.1 569.2L541.1 566.0L542.4 562.8L544.1 559.7L546.1 556.7L548.5 553.8L551.1 551.2L553.9 548.7L557.0 546.6L560.3 544.6L563.8 543.0L567.3 541.6L571.0 540.6L574.6 539.9L578.3 539.6L581.9 539.6L585.4 539.9L588.8 540.6L592.0 541.6L595.0 542.9L597.8 544.6L600.3 546.5L602.5 548.7L610.9 541.9Z M710.9 548.4L710.7 552.3L710.1 556.3L709.2 560.2L707.8 564.1L706.0 567.9L703.9 571.6L701.5 575.1L698.8 578.5L695.7 581.6L692.4 584.4L688.9 587.0L685.3 589.3L681.4 591.2L677.4 592.8L673.4 594.0L669.3 594.8L665.2 595.3L661.2 595.4L657.2 595.0L653.4 594.3L649.7 593.2L646.2 591.8L642.9 590.0L639.9 587.8L637.1 585.4L634.7 582.6L632.6 579.6L630.9 576.3L629.5 572.9L628.5 569.2L627.9 565.5L627.7 561.6L627.9 557.7L628.5 553.7L629.5 549.7L630.9 545.8L632.6 542.0L634.7 538.3L637.1 534.8L639.9 531.5L642.9 528.4L646.2 525.5L649.7 523.0L653.4 520.7L657.2 518.8L661.2 517.2L665.2 516.0L669.3 515.1L673.4 514.7L677.4 514.6L681.4 514.9L685.3 515.6L688.9 516.7L692.4 518.2L695.7 520.0L698.8 522.1L701.5 524.6L703.9 527.3L706.0 530.4L707.8 533.6L709.2 537.1L710.1 540.7L710.7 544.5L710.9 548.4Z M700.8 550.0L700.6 553.4L700.0 556.8L699.0 560.2L697.7 563.5L696.0 566.8L693.9 569.9L691.6 572.7L688.9 575.4L686.1 577.8L683.0 580.0L679.7 581.8L676.3 583.2L672.8 584.4L669.3 585.1L665.8 585.5L662.3 585.5L658.9 585.1L655.7 584.3L652.6 583.2L649.7 581.7L647.1 579.8L644.7 577.7L642.7 575.3L641.0 572.6L639.6 569.7L638.6 566.6L638.0 563.3L637.8 560.0L638.0 556.6L638.6 553.2L639.6 549.8L641.0 546.4L642.7 543.2L644.7 540.1L647.1 537.2L649.7 534.5L652.6 532.1L655.7 530.0L658.9 528.2L662.3 526.7L665.8 525.6L669.3 524.8L672.8 524.5L676.3 524.5L679.7 524.9L683.0 525.7L686.1 526.8L688.9 528.3L691.6 530.1L693.9 532.3L696.0 534.7L697.7 537.4L699.0 540.3L700.0 543.4L700.6 546.6L700.8 550.0Z M899.0 536.5L897.4 539.6L895.5 542.6L893.4 545.4L891.1 548.2L888.6 550.7L885.9 553.1L883.1 555.3L880.1 557.3L877.0 559.1L873.8 560.6L870.5 562.0L867.2 563.0L863.8 563.8L860.5 564.4L857.1 564.7L853.8 564.7L850.5 564.5L847.3 564.0L844.2 563.2L841.2 562.2L838.3 560.9L835.6 559.4L833.1 557.6L830.8 555.7L828.6 553.5L826.7 551.2L825.0 548.6L823.6 545.9L822.4 543.1L821.5 540.1L820.8 537.1L820.4 533.9L820.3 530.7L820.5 527.5L820.9 524.2L821.6 520.9L822.6 517.7L823.8 514.5L825.3 511.3L827.0 508.3L828.9 505.3L831.1 502.5L833.5 499.8L836.0 497.3L838.7 495.0L841.6 492.8L844.6 490.9L847.7 489.1L851.0 487.6L854.2 486.4L857.6 485.4L861.0 484.7L864.3 484.2L867.7 484.0L871.0 484.0L874.3 484.3L877.5 484.9L880.5 485.7L883.5 486.8L886.3 488.1L889.0 489.7L891.4 491.5L893.7 493.5L895.8 495.7L897.6 498.1L899.3 500.7L900.6 503.5L901.8 506.3L902.6 509.3L903.2 512.4L903.5 515.6L903.6 518.8L903.6 518.8L894.4 520.2L885.3 521.7L876.2 523.1L867.0 524.6L857.9 526.1L848.8 527.5L839.6 529.0L830.5 530.4L830.5 530.4L830.6 532.2L830.9 533.9L831.2 535.7L831.7 537.3L832.2 539.0L832.9 540.6L833.7 542.1L834.6 543.5L835.5 544.9L836.6 546.2L837.8 547.5L839.0 548.6L840.3 549.7L841.8 550.7L843.2 551.5L844.8 552.3L846.4 553.0L848.1 553.6L849.8 554.1L851.5 554.4L853.3 554.7L855.2 554.8L857.0 554.9L858.9 554.8L860.8 554.6L862.6 554.3L864.5 554.0L866.4 553.5L868.3 552.9L870.1 552.1L871.9 551.3L873.7 550.4L875.4 549.4L877.1 548.4L878.7 547.2L880.3 545.9L881.8 544.6L883.2 543.2L884.5 541.7L885.8 540.2L887.0 538.6L888.1 537.0L889.1 535.3L890.0 533.5L899.0 536.5Z M831.8 520.4L832.5 518.3L833.4 516.2L834.4 514.1L835.6 512.1L836.9 510.1L838.3 508.2L839.8 506.4L841.5 504.7L843.2 503.1L845.0 501.6L847.0 500.2L849.0 499.0L851.0 497.8L853.1 496.8L855.3 495.9L857.5 495.2L859.7 494.6L862.0 494.2L864.2 493.9L866.4 493.8L868.6 493.8L870.8 494.0L872.9 494.3L875.0 494.8L877.0 495.5L878.9 496.2L880.7 497.2L882.5 498.2L884.1 499.4L885.6 500.7L887.0 502.1L888.3 503.7L889.5 505.3L890.5 507.1L891.4 508.9L892.1 510.8L892.1 510.8L884.6 512.0L877.0 513.2L869.5 514.4L862.0 515.6L854.4 516.8L846.9 518.0L839.4 519.2L831.8 520.4Z M996.0 521.1L994.4 524.2L992.5 527.2L990.4 530.0L988.1 532.7L985.6 535.3L982.9 537.7L980.0 539.9L977.1 541.9L974.0 543.7L970.8 545.2L967.5 546.5L964.2 547.6L960.8 548.4L957.4 549.0L954.1 549.3L950.7 549.3L947.5 549.0L944.3 548.5L941.2 547.8L938.2 546.7L935.3 545.5L932.6 544.0L930.1 542.2L927.7 540.3L925.6 538.1L923.7 535.7L922.0 533.2L920.6 530.5L919.4 527.7L918.5 524.7L917.8 521.6L917.4 518.5L917.3 515.3L917.5 512.0L917.9 508.8L918.6 505.5L919.6 502.2L920.8 499.0L922.3 495.9L924.0 492.8L925.9 489.9L928.1 487.1L930.4 484.4L933.0 481.9L935.7 479.5L938.6 477.4L941.6 475.4L944.7 473.7L947.9 472.2L951.2 471.0L954.6 470.0L957.9 469.2L961.3 468.7L964.7 468.5L968.0 468.6L971.2 468.9L974.4 469.5L977.5 470.3L980.5 471.4L983.3 472.7L985.9 474.3L988.4 476.1L990.7 478.1L992.8 480.3L994.6 482.7L996.2 485.3L997.6 488.0L998.7 490.9L999.6 493.9L1000.2 497.0L1000.5 500.1L1000.5 503.4L1000.5 503.4L991.4 504.8L982.3 506.3L973.1 507.7L964.0 509.2L954.9 510.6L945.7 512.1L936.6 513.5L927.5 515.0L927.5 515.0L927.6 516.8L927.8 518.5L928.2 520.2L928.6 521.9L929.2 523.5L929.9 525.1L930.7 526.6L931.5 528.1L932.5 529.5L933.6 530.8L934.7 532.0L936.0 533.2L937.3 534.3L938.7 535.2L940.2 536.1L941.8 536.9L943.4 537.6L945.0 538.2L946.8 538.6L948.5 539.0L950.3 539.3L952.1 539.4L954.0 539.4L955.9 539.4L957.7 539.2L959.6 538.9L961.5 538.5L963.4 538.0L965.2 537.4L967.1 536.7L968.9 535.9L970.6 535.0L972.4 534.0L974.0 532.9L975.7 531.8L977.2 530.5L978.7 529.2L980.2 527.8L981.5 526.3L982.8 524.8L984.0 523.2L985.1 521.5L986.1 519.8L987.0 518.1L996.0 521.1Z M928.8 505.0L929.5 502.8L930.4 500.7L931.4 498.7L932.6 496.6L933.8 494.7L935.3 492.8L936.8 491.0L938.4 489.3L940.2 487.7L942.0 486.2L943.9 484.8L945.9 483.5L948.0 482.4L950.1 481.4L952.3 480.5L954.5 479.8L956.7 479.2L958.9 478.8L961.2 478.5L963.4 478.4L965.6 478.4L967.7 478.6L969.9 478.9L971.9 479.4L973.9 480.0L975.9 480.8L977.7 481.7L979.4 482.8L981.1 484.0L982.6 485.3L984.0 486.7L985.3 488.3L986.5 489.9L987.5 491.6L988.3 493.5L989.1 495.4L989.1 495.4L981.5 496.6L974.0 497.8L966.5 499.0L958.9 500.2L951.4 501.4L943.9 502.6L936.3 503.8L928.8 505.0Z" fill="none" stroke="#55a8fa" stroke-width="2" stroke-linejoin="round"/>
<path d="M602.9 520.8L600.3 517.6L597.5 514.7L594.4 511.9L591.1 509.3L587.6 506.9L583.9 504.8L580.0 503.0L576.1 501.4L572.1 500.1L568.0 499.1L564.0 498.3L559.9 497.9L556.0 497.8L552.1 498.0L548.4 498.5L544.8 499.4L541.4 500.5L538.2 501.9L535.2 503.6L532.6 505.6L530.1 507.9L528.0 510.4L526.2 513.2L524.7 516.1L523.5 519.3L522.6 522.6L522.1 526.0L522.0 529.6L522.1 533.3L522.6 537.0L523.5 540.7L524.7 544.5L526.2 548.1L528.0 551.7L530.1 555.2L532.6 558.6L535.2 561.8L538.2 564.8L541.4 567.5L544.8 570.1L548.4 572.3L552.1 574.2L556.0 575.8L559.9 577.1L564.0 578.0L568.0 578.6L572.1 578.8L576.1 578.7L580.0 578.2L583.9 577.3L587.6 576.1L591.1 574.6L594.4 572.8L597.5 570.6L600.3 568.2L602.9 565.6L594.2 559.2L591.9 561.5L589.3 563.5L586.4 565.3L583.4 566.7L580.1 567.8L576.6 568.5L573.1 568.9L569.4 568.9L565.8 568.6L562.1 567.9L558.5 566.8L555.0 565.5L551.6 563.7L548.4 561.7L545.4 559.4L542.6 556.9L540.1 554.1L537.9 551.2L536.0 548.1L534.4 544.9L533.1 541.7L532.2 538.4L531.6 535.1L531.5 531.9L531.6 528.7L532.2 525.7L533.1 522.8L534.4 520.1L536.0 517.6L537.9 515.4L540.1 513.4L542.6 511.7L545.4 510.3L548.4 509.1L551.6 508.3L555.0 507.9L558.5 507.7L562.1 507.9L565.8 508.3L569.4 509.2L573.1 510.3L576.6 511.7L580.1 513.4L583.4 515.3L586.4 517.5L589.3 519.9L591.9 522.6L594.2 525.4L602.9 520.8Z M707.7 544.9L707.5 548.9L706.9 552.8L705.9 556.6L704.4 560.4L702.6 564.0L700.3 567.5L697.8 570.8L694.9 573.8L691.7 576.6L688.2 579.1L684.5 581.2L680.5 583.0L676.5 584.4L672.2 585.4L667.9 586.0L663.6 586.2L659.3 586.0L655.0 585.4L650.7 584.4L646.7 582.9L642.7 581.1L639.0 579.0L635.5 576.5L632.3 573.8L629.4 570.7L626.9 567.4L624.7 563.9L622.8 560.3L621.4 556.5L620.3 552.7L619.7 548.8L619.5 544.8L619.7 540.9L620.3 537.1L621.4 533.4L622.8 529.8L624.7 526.4L626.9 523.2L629.4 520.2L632.3 517.4L635.5 514.9L639.0 512.7L642.7 510.9L646.7 509.3L650.7 508.1L655.0 507.2L659.3 506.7L663.6 506.5L667.9 506.7L672.2 507.2L676.5 508.1L680.5 509.3L684.5 510.9L688.2 512.8L691.7 515.0L694.9 517.5L697.8 520.2L700.3 523.2L702.6 526.5L704.4 529.9L705.9 533.5L706.9 537.2L707.5 541.0L707.7 544.9Z M697.0 545.6L696.8 548.9L696.2 552.3L695.2 555.6L693.7 558.8L691.9 561.8L689.8 564.7L687.3 567.3L684.5 569.6L681.4 571.7L678.1 573.4L674.7 574.7L671.1 575.7L667.4 576.3L663.6 576.5L659.9 576.3L656.2 575.7L652.5 574.7L649.1 573.3L645.8 571.6L642.7 569.6L639.9 567.2L637.5 564.6L635.3 561.8L633.5 558.7L632.1 555.5L631.0 552.2L630.4 548.9L630.2 545.5L630.4 542.1L631.0 538.8L632.1 535.6L633.5 532.6L635.3 529.7L637.5 527.0L639.9 524.6L642.7 522.4L645.8 520.6L649.1 519.0L652.5 517.8L656.2 516.9L659.9 516.4L663.6 516.2L667.4 516.4L671.1 516.9L674.7 517.8L678.1 519.1L681.4 520.6L684.5 522.5L687.3 524.7L689.8 527.1L691.9 529.8L693.7 532.6L695.2 535.7L696.2 538.9L696.8 542.2L697.0 545.6Z M733.5 582.1L733.5 568.5L733.5 554.9L733.5 541.4L733.5 527.8L733.5 514.2L733.5 514.2L731.2 514.4L729.0 514.7L726.7 514.9L724.4 515.1L722.1 515.3L722.1 515.3L722.1 513.6L722.1 511.9L722.1 510.2L722.1 508.4L722.1 506.7L722.1 506.7L724.4 506.5L726.7 506.3L729.0 506.1L731.2 505.9L733.5 505.7L733.5 505.7L733.5 502.4L733.5 499.2L733.5 495.9L733.5 492.7L733.5 489.5L733.5 489.5L733.6 487.0L733.9 484.8L734.3 482.7L735.0 480.8L735.8 479.0L736.8 477.4L738.0 476.0L739.3 474.7L740.8 473.6L742.5 472.6L744.3 471.8L746.3 471.1L748.5 470.6L750.8 470.2L750.8 470.2L753.1 470.1L755.2 470.2L757.2 470.5L759.1 471.1L760.9 471.7L762.6 472.5L762.6 472.5L762.4 474.4L762.2 476.2L761.9 478.1L761.7 480.0L761.5 481.8L761.5 481.8L760.0 480.9L758.5 480.2L757.0 479.8L755.5 479.5L754.1 479.4L752.7 479.5L752.7 479.5L751.5 479.7L750.4 480.0L749.3 480.4L748.4 480.8L747.5 481.4L746.8 482.0L746.1 482.7L745.5 483.5L745.0 484.4L744.5 485.4L744.2 486.4L744.0 487.6L743.8 488.8L743.8 490.1L743.8 490.1L743.8 493.0L743.8 495.9L743.8 498.7L743.8 501.6L743.8 504.5L743.8 504.5L747.3 504.1L750.8 503.6L754.3 503.1L757.8 502.6L761.2 502.1L761.2 502.1L761.2 503.8L761.2 505.5L761.2 507.2L761.2 509.0L761.2 510.7L761.2 510.7L757.8 511.2L754.3 511.7L750.8 512.1L747.3 512.6L743.8 513.0L743.8 513.0L743.8 526.6L743.8 540.2L743.8 553.8L743.8 567.4L743.8 580.9L743.8 580.9L741.7 581.2L739.7 581.4L737.6 581.7L735.6 581.9L733.5 582.1Z M781.5 575.1L781.5 561.5L781.5 547.9L781.5 534.4L781.5 520.8L781.5 507.2L781.5 507.2L779.4 507.6L777.2 508.0L775.1 508.4L772.9 508.8L770.8 509.1L770.8 509.1L770.8 507.4L770.8 505.7L770.8 504.0L770.8 502.3L770.8 500.6L770.8 500.6L772.9 500.2L775.1 499.8L777.2 499.4L779.4 499.1L781.5 498.7L781.5 498.7L781.5 495.4L781.5 492.2L781.5 488.9L781.5 485.7L781.5 482.5L781.5 482.5L781.6 480.0L781.9 477.8L782.3 475.6L782.9 473.7L783.7 471.9L784.7 470.2L785.8 468.7L787.0 467.3L788.4 466.1L790.0 465.0L791.7 464.0L793.6 463.2L795.6 462.5L797.7 462.0L797.7 462.0L799.9 461.6L801.9 461.6L803.7 461.8L805.5 462.2L807.2 462.7L808.7 463.3L808.7 463.3L808.5 465.2L808.3 467.1L808.1 469.0L807.9 470.9L807.7 472.8L807.7 472.8L806.3 472.0L804.9 471.4L803.5 471.0L802.2 470.9L800.8 470.9L799.5 471.1L799.5 471.1L798.4 471.4L797.4 471.8L796.4 472.2L795.5 472.7L794.7 473.4L794.0 474.0L793.4 474.8L792.8 475.6L792.3 476.6L791.9 477.6L791.6 478.6L791.4 479.8L791.3 481.0L791.2 482.3L791.2 482.3L791.2 485.2L791.2 488.1L791.2 491.0L791.2 493.8L791.2 496.7L791.2 496.7L794.5 496.0L797.8 495.3L801.0 494.6L804.2 493.8L807.4 493.1L807.4 493.1L807.4 494.8L807.4 496.5L807.4 498.2L807.4 499.9L807.4 501.6L807.4 501.6L804.2 502.4L801.0 503.1L797.8 503.9L794.5 504.6L791.2 505.3L791.2 505.3L791.2 518.9L791.2 532.4L791.2 546.0L791.2 559.6L791.2 573.2L791.2 573.2L789.3 573.6L787.4 574.0L785.4 574.4L783.5 574.7L781.5 575.1Z M883.6 524.8L882.4 528.2L881.1 531.5L879.5 534.8L877.8 537.9L876.0 540.9L874.0 543.8L871.9 546.5L869.6 549.0L867.2 551.2L864.7 553.3L862.2 555.1L859.5 556.7L856.8 558.0L854.1 559.0L851.3 559.8L848.6 560.2L845.8 560.4L843.1 560.3L840.5 559.9L837.9 559.2L835.4 558.3L833.1 557.1L830.9 555.6L828.8 553.9L826.9 551.9L825.2 549.7L823.7 547.4L822.4 544.8L821.3 542.1L820.5 539.2L819.9 536.2L819.6 533.1L819.5 529.9L819.6 526.6L820.0 523.3L820.6 520.0L821.5 516.6L822.6 513.3L823.9 510.0L825.4 506.8L827.2 503.7L829.1 500.7L831.2 497.7L833.4 494.9L835.8 492.3L838.3 489.8L840.9 487.5L843.5 485.4L846.2 483.5L849.0 481.9L851.7 480.4L854.5 479.2L857.2 478.3L859.9 477.5L862.5 477.1L865.1 476.9L867.6 477.0L869.9 477.3L872.2 477.9L874.3 478.7L876.3 479.8L878.1 481.2L879.8 482.8L881.3 484.7L882.6 486.7L883.7 489.0L884.7 491.5L885.5 494.1L886.1 496.9L886.5 499.9L886.7 503.0L886.8 506.2L886.8 506.2L880.3 509.4L873.5 512.5L866.6 515.4L859.4 518.3L852.0 521.0L844.4 523.7L836.6 526.2L828.6 528.6L828.6 528.6L828.7 530.4L828.9 532.1L829.2 533.8L829.6 535.4L830.1 537.0L830.7 538.5L831.4 540.0L832.1 541.3L833.0 542.6L833.9 543.8L834.9 544.9L836.0 545.9L837.2 546.9L838.4 547.7L839.7 548.4L841.0 549.0L842.4 549.5L843.8 549.8L845.2 550.1L846.7 550.3L848.2 550.3L849.7 550.2L851.2 550.0L852.8 549.7L854.3 549.2L855.9 548.7L857.4 548.0L858.9 547.2L860.4 546.4L861.8 545.4L863.2 544.3L864.6 543.1L866.0 541.8L867.3 540.5L868.5 539.1L869.7 537.5L870.9 536.0L872.0 534.3L873.0 532.6L873.9 530.9L874.8 529.1L875.6 527.2L876.4 525.4L877.0 523.5L883.6 524.8Z M829.7 518.5L830.4 516.3L831.1 514.1L832.0 511.9L833.0 509.8L834.2 507.7L835.4 505.6L836.7 503.7L838.1 501.8L839.6 500.0L841.2 498.2L842.8 496.6L844.5 495.1L846.3 493.7L848.0 492.4L849.8 491.3L851.7 490.2L853.5 489.4L855.3 488.6L857.1 488.0L858.9 487.6L860.6 487.3L862.4 487.1L864.0 487.1L865.6 487.3L867.2 487.6L868.7 488.1L870.1 488.7L871.4 489.5L872.6 490.4L873.8 491.4L874.8 492.6L875.8 493.9L876.7 495.4L877.4 496.9L878.0 498.6L878.6 500.4L878.6 500.4L873.0 502.9L867.2 505.4L861.3 507.7L855.3 510.0L849.1 512.3L842.8 514.4L836.3 516.5L829.7 518.5Z M936.8 486.7L936.2 490.2L935.4 493.7L934.6 497.1L933.6 500.5L932.5 503.7L931.4 506.8L930.1 509.8L928.8 512.5L927.3 515.1L925.8 517.5L924.2 519.6L922.6 521.5L920.8 523.2L919.1 524.6L917.3 525.7L915.5 526.5L913.7 527.0L911.8 527.3L910.1 527.2L908.3 526.9L906.6 526.3L905.0 525.4L903.4 524.2L902.0 522.8L900.6 521.0L899.4 519.1L898.3 516.9L897.4 514.5L896.6 511.9L896.0 509.2L895.6 506.3L895.4 503.2L895.3 500.0L895.4 496.7L895.7 493.4L896.1 489.9L896.8 486.5L897.5 483.0L898.5 479.6L899.6 476.2L900.8 472.8L902.2 469.5L903.6 466.3L905.2 463.2L906.8 460.3L908.5 457.5L910.3 454.8L912.1 452.4L913.9 450.1L915.7 448.1L917.5 446.3L919.3 444.7L921.1 443.4L922.8 442.3L924.4 441.5L926.0 441.0L927.5 440.8L929.0 440.8L930.3 441.1L931.5 441.7L932.7 442.6L933.7 443.7L934.7 445.1L935.5 446.8L936.3 448.7L936.9 450.8L937.4 453.2L937.9 455.7L938.2 458.5L938.4 461.4L938.5 464.5L938.6 467.7L938.6 467.7L935.0 471.6L931.1 475.5L926.9 479.4L922.5 483.2L917.7 486.9L912.7 490.5L907.4 494.1L901.8 497.5L901.8 497.5L901.9 499.3L902.0 501.0L902.2 502.6L902.5 504.2L902.9 505.7L903.3 507.1L903.8 508.5L904.3 509.8L904.9 510.9L905.6 512.0L906.3 513.0L907.0 513.9L907.8 514.6L908.6 515.3L909.5 515.8L910.4 516.2L911.3 516.5L912.3 516.7L913.3 516.8L914.2 516.8L915.2 516.6L916.2 516.3L917.2 515.9L918.2 515.4L919.2 514.7L920.2 514.0L921.2 513.1L922.1 512.2L923.1 511.1L924.0 509.9L924.9 508.7L925.7 507.3L926.6 505.9L927.4 504.4L928.1 502.8L928.8 501.1L929.5 499.4L930.2 497.6L930.8 495.8L931.3 493.9L931.8 492.0L932.3 490.1L932.8 488.1L933.1 486.1L936.8 486.7Z M902.6 487.2L903.1 484.9L903.6 482.6L904.2 480.4L904.9 478.1L905.7 475.8L906.6 473.6L907.5 471.5L908.5 469.4L909.5 467.4L910.5 465.5L911.7 463.6L912.8 461.9L914.0 460.3L915.1 458.8L916.3 457.4L917.5 456.1L918.7 455.0L919.9 454.0L921.0 453.2L922.2 452.5L923.3 452.0L924.3 451.6L925.4 451.4L926.4 451.4L927.3 451.5L928.2 451.8L929.0 452.2L929.8 452.8L930.6 453.6L931.3 454.5L931.9 455.5L932.4 456.7L932.9 458.1L933.3 459.5L933.7 461.1L934.0 462.9L934.0 462.9L930.8 466.1L927.3 469.2L923.7 472.3L919.9 475.4L915.8 478.5L911.6 481.4L907.2 484.4L902.6 487.2Z" fill="none" stroke="#061830" stroke-opacity="0.55" stroke-width="3.6" stroke-linejoin="round"/>
<path d="M602.9 520.8L600.3 517.6L597.5 514.7L594.4 511.9L591.1 509.3L587.6 506.9L583.9 504.8L580.0 503.0L576.1 501.4L572.1 500.1L568.0 499.1L564.0 498.3L559.9 497.9L556.0 497.8L552.1 498.0L548.4 498.5L544.8 499.4L541.4 500.5L538.2 501.9L535.2 503.6L532.6 505.6L530.1 507.9L528.0 510.4L526.2 513.2L524.7 516.1L523.5 519.3L522.6 522.6L522.1 526.0L522.0 529.6L522.1 533.3L522.6 537.0L523.5 540.7L524.7 544.5L526.2 548.1L528.0 551.7L530.1 555.2L532.6 558.6L535.2 561.8L538.2 564.8L541.4 567.5L544.8 570.1L548.4 572.3L552.1 574.2L556.0 575.8L559.9 577.1L564.0 578.0L568.0 578.6L572.1 578.8L576.1 578.7L580.0 578.2L583.9 577.3L587.6 576.1L591.1 574.6L594.4 572.8L597.5 570.6L600.3 568.2L602.9 565.6L594.2 559.2L591.9 561.5L589.3 563.5L586.4 565.3L583.4 566.7L580.1 567.8L576.6 568.5L573.1 568.9L569.4 568.9L565.8 568.6L562.1 567.9L558.5 566.8L555.0 565.5L551.6 563.7L548.4 561.7L545.4 559.4L542.6 556.9L540.1 554.1L537.9 551.2L536.0 548.1L534.4 544.9L533.1 541.7L532.2 538.4L531.6 535.1L531.5 531.9L531.6 528.7L532.2 525.7L533.1 522.8L534.4 520.1L536.0 517.6L537.9 515.4L540.1 513.4L542.6 511.7L545.4 510.3L548.4 509.1L551.6 508.3L555.0 507.9L558.5 507.7L562.1 507.9L565.8 508.3L569.4 509.2L573.1 510.3L576.6 511.7L580.1 513.4L583.4 515.3L586.4 517.5L589.3 519.9L591.9 522.6L594.2 525.4L602.9 520.8Z M707.7 544.9L707.5 548.9L706.9 552.8L705.9 556.6L704.4 560.4L702.6 564.0L700.3 567.5L697.8 570.8L694.9 573.8L691.7 576.6L688.2 579.1L684.5 581.2L680.5 583.0L676.5 584.4L672.2 585.4L667.9 586.0L663.6 586.2L659.3 586.0L655.0 585.4L650.7 584.4L646.7 582.9L642.7 581.1L639.0 579.0L635.5 576.5L632.3 573.8L629.4 570.7L626.9 567.4L624.7 563.9L622.8 560.3L621.4 556.5L620.3 552.7L619.7 548.8L619.5 544.8L619.7 540.9L620.3 537.1L621.4 533.4L622.8 529.8L624.7 526.4L626.9 523.2L629.4 520.2L632.3 517.4L635.5 514.9L639.0 512.7L642.7 510.9L646.7 509.3L650.7 508.1L655.0 507.2L659.3 506.7L663.6 506.5L667.9 506.7L672.2 507.2L676.5 508.1L680.5 509.3L684.5 510.9L688.2 512.8L691.7 515.0L694.9 517.5L697.8 520.2L700.3 523.2L702.6 526.5L704.4 529.9L705.9 533.5L706.9 537.2L707.5 541.0L707.7 544.9Z M697.0 545.6L696.8 548.9L696.2 552.3L695.2 555.6L693.7 558.8L691.9 561.8L689.8 564.7L687.3 567.3L684.5 569.6L681.4 571.7L678.1 573.4L674.7 574.7L671.1 575.7L667.4 576.3L663.6 576.5L659.9 576.3L656.2 575.7L652.5 574.7L649.1 573.3L645.8 571.6L642.7 569.6L639.9 567.2L637.5 564.6L635.3 561.8L633.5 558.7L632.1 555.5L631.0 552.2L630.4 548.9L630.2 545.5L630.4 542.1L631.0 538.8L632.1 535.6L633.5 532.6L635.3 529.7L637.5 527.0L639.9 524.6L642.7 522.4L645.8 520.6L649.1 519.0L652.5 517.8L656.2 516.9L659.9 516.4L663.6 516.2L667.4 516.4L671.1 516.9L674.7 517.8L678.1 519.1L681.4 520.6L684.5 522.5L687.3 524.7L689.8 527.1L691.9 529.8L693.7 532.6L695.2 535.7L696.2 538.9L696.8 542.2L697.0 545.6Z M883.6 524.8L882.4 528.2L881.1 531.5L879.5 534.8L877.8 537.9L876.0 540.9L874.0 543.8L871.9 546.5L869.6 549.0L867.2 551.2L864.7 553.3L862.2 555.1L859.5 556.7L856.8 558.0L854.1 559.0L851.3 559.8L848.6 560.2L845.8 560.4L843.1 560.3L840.5 559.9L837.9 559.2L835.4 558.3L833.1 557.1L830.9 555.6L828.8 553.9L826.9 551.9L825.2 549.7L823.7 547.4L822.4 544.8L821.3 542.1L820.5 539.2L819.9 536.2L819.6 533.1L819.5 529.9L819.6 526.6L820.0 523.3L820.6 520.0L821.5 516.6L822.6 513.3L823.9 510.0L825.4 506.8L827.2 503.7L829.1 500.7L831.2 497.7L833.4 494.9L835.8 492.3L838.3 489.8L840.9 487.5L843.5 485.4L846.2 483.5L849.0 481.9L851.7 480.4L854.5 479.2L857.2 478.3L859.9 477.5L862.5 477.1L865.1 476.9L867.6 477.0L869.9 477.3L872.2 477.9L874.3 478.7L876.3 479.8L878.1 481.2L879.8 482.8L881.3 484.7L882.6 486.7L883.7 489.0L884.7 491.5L885.5 494.1L886.1 496.9L886.5 499.9L886.7 503.0L886.8 506.2L886.8 506.2L880.3 509.4L873.5 512.5L866.6 515.4L859.4 518.3L852.0 521.0L844.4 523.7L836.6 526.2L828.6 528.6L828.6 528.6L828.7 530.4L828.9 532.1L829.2 533.8L829.6 535.4L830.1 537.0L830.7 538.5L831.4 540.0L832.1 541.3L833.0 542.6L833.9 543.8L834.9 544.9L836.0 545.9L837.2 546.9L838.4 547.7L839.7 548.4L841.0 549.0L842.4 549.5L843.8 549.8L845.2 550.1L846.7 550.3L848.2 550.3L849.7 550.2L851.2 550.0L852.8 549.7L854.3 549.2L855.9 548.7L857.4 548.0L858.9 547.2L860.4 546.4L861.8 545.4L863.2 544.3L864.6 543.1L866.0 541.8L867.3 540.5L868.5 539.1L869.7 537.5L870.9 536.0L872.0 534.3L873.0 532.6L873.9 530.9L874.8 529.1L875.6 527.2L876.4 525.4L877.0 523.5L883.6 524.8Z M829.7 518.5L830.4 516.3L831.1 514.1L832.0 511.9L833.0 509.8L834.2 507.7L835.4 505.6L836.7 503.7L838.1 501.8L839.6 500.0L841.2 498.2L842.8 496.6L844.5 495.1L846.3 493.7L848.0 492.4L849.8 491.3L851.7 490.2L853.5 489.4L855.3 488.6L857.1 488.0L858.9 487.6L860.6 487.3L862.4 487.1L864.0 487.1L865.6 487.3L867.2 487.6L868.7 488.1L870.1 488.7L871.4 489.5L872.6 490.4L873.8 491.4L874.8 492.6L875.8 493.9L876.7 495.4L877.4 496.9L878.0 498.6L878.6 500.4L878.6 500.4L873.0 502.9L867.2 505.4L861.3 507.7L855.3 510.0L849.1 512.3L842.8 514.4L836.3 516.5L829.7 518.5Z M936.8 486.7L936.2 490.2L935.4 493.7L934.6 497.1L933.6 500.5L932.5 503.7L931.4 506.8L930.1 509.8L928.8 512.5L927.3 515.1L925.8 517.5L924.2 519.6L922.6 521.5L920.8 523.2L919.1 524.6L917.3 525.7L915.5 526.5L913.7 527.0L911.8 527.3L910.1 527.2L908.3 526.9L906.6 526.3L905.0 525.4L903.4 524.2L902.0 522.8L900.6 521.0L899.4 519.1L898.3 516.9L897.4 514.5L896.6 511.9L896.0 509.2L895.6 506.3L895.4 503.2L895.3 500.0L895.4 496.7L895.7 493.4L896.1 489.9L896.8 486.5L897.5 483.0L898.5 479.6L899.6 476.2L900.8 472.8L902.2 469.5L903.6 466.3L905.2 463.2L906.8 460.3L908.5 457.5L910.3 454.8L912.1 452.4L913.9 450.1L915.7 448.1L917.5 446.3L919.3 444.7L921.1 443.4L922.8 442.3L924.4 441.5L926.0 441.0L927.5 440.8L929.0 440.8L930.3 441.1L931.5 441.7L932.7 442.6L933.7 443.7L934.7 445.1L935.5 446.8L936.3 448.7L936.9 450.8L937.4 453.2L937.9 455.7L938.2 458.5L938.4 461.4L938.5 464.5L938.6 467.7L938.6 467.7L935.0 471.6L931.1 475.5L926.9 479.4L922.5 483.2L917.7 486.9L912.7 490.5L907.4 494.1L901.8 497.5L901.8 497.5L901.9 499.3L902.0 501.0L902.2 502.6L902.5 504.2L902.9 505.7L903.3 507.1L903.8 508.5L904.3 509.8L904.9 510.9L905.6 512.0L906.3 513.0L907.0 513.9L907.8 514.6L908.6 515.3L909.5 515.8L910.4 516.2L911.3 516.5L912.3 516.7L913.3 516.8L914.2 516.8L915.2 516.6L916.2 516.3L917.2 515.9L918.2 515.4L919.2 514.7L920.2 514.0L921.2 513.1L922.1 512.2L923.1 511.1L924.0 509.9L924.9 508.7L925.7 507.3L926.6 505.9L927.4 504.4L928.1 502.8L928.8 501.1L929.5 499.4L930.2 497.6L930.8 495.8L931.3 493.9L931.8 492.0L932.3 490.1L932.8 488.1L933.1 486.1L936.8 486.7Z M902.6 487.2L903.1 484.9L903.6 482.6L904.2 480.4L904.9 478.1L905.7 475.8L906.6 473.6L907.5 471.5L908.5 469.4L909.5 467.4L910.5 465.5L911.7 463.6L912.8 461.9L914.0 460.3L915.1 458.8L916.3 457.4L917.5 456.1L918.7 455.0L919.9 454.0L921.0 453.2L922.2 452.5L923.3 452.0L924.3 451.6L925.4 451.4L926.4 451.4L927.3 451.5L928.2 451.8L929.0 452.2L929.8 452.8L930.6 453.6L931.3 454.5L931.9 455.5L932.4 456.7L932.9 458.1L933.3 459.5L933.7 461.1L934.0 462.9L934.0 462.9L930.8 466.1L927.3 469.2L923.7 472.3L919.9 475.4L915.8 478.5L911.6 481.4L907.2 484.4L902.6 487.2Z" fill="none" stroke="#f3f322" stroke-width="2.2" stroke-linejoin="round"/>
<path d="M733.5 582.1L733.5 568.5L733.5 554.9L733.5 541.4L733.5 527.8L733.5 514.2L733.5 514.2L731.2 514.4L729.0 514.7L726.7 514.9L724.4 515.1L722.1 515.3L722.1 515.3L722.1 513.6L722.1 511.9L722.1 510.2L722.1 508.4L722.1 506.7L722.1 506.7L724.4 506.5L726.7 506.3L729.0 506.1L731.2 505.9L733.5 505.7L733.5 505.7L733.5 502.4L733.5 499.2L733.5 495.9L733.5 492.7L733.5 489.5L733.5 489.5L733.6 487.0L733.9 484.8L734.3 482.7L735.0 480.8L735.8 479.0L736.8 477.4L738.0 476.0L739.3 474.7L740.8 473.6L742.5 472.6L744.3 471.8L746.3 471.1L748.5 470.6L750.8 470.2L750.8 470.2L753.1 470.1L755.2 470.2L757.2 470.5L759.1 471.1L760.9 471.7L762.6 472.5L762.6 472.5L762.4 474.4L762.2 476.2L761.9 478.1L761.7 480.0L761.5 481.8L761.5 481.8L760.0 480.9L758.5 480.2L757.0 479.8L755.5 479.5L754.1 479.4L752.7 479.5L752.7 479.5L751.5 479.7L750.4 480.0L749.3 480.4L748.4 480.8L747.5 481.4L746.8 482.0L746.1 482.7L745.5 483.5L745.0 484.4L744.5 485.4L744.2 486.4L744.0 487.6L743.8 488.8L743.8 490.1L743.8 490.1L743.8 493.0L743.8 495.9L743.8 498.7L743.8 501.6L743.8 504.5L743.8 504.5L747.3 504.1L750.8 503.6L754.3 503.1L757.8 502.6L761.2 502.1L761.2 502.1L761.2 503.8L761.2 505.5L761.2 507.2L761.2 509.0L761.2 510.7L761.2 510.7L757.8 511.2L754.3 511.7L750.8 512.1L747.3 512.6L743.8 513.0L743.8 513.0L743.8 526.6L743.8 540.2L743.8 553.8L743.8 567.4L743.8 580.9L743.8 580.9L741.7 581.2L739.7 581.4L737.6 581.7L735.6 581.9L733.5 582.1Z M781.5 575.1L781.5 561.5L781.5 547.9L781.5 534.4L781.5 520.8L781.5 507.2L781.5 507.2L779.4 507.6L777.2 508.0L775.1 508.4L772.9 508.8L770.8 509.1L770.8 509.1L770.8 507.4L770.8 505.7L770.8 504.0L770.8 502.3L770.8 500.6L770.8 500.6L772.9 500.2L775.1 499.8L777.2 499.4L779.4 499.1L781.5 498.7L781.5 498.7L781.5 495.4L781.5 492.2L781.5 488.9L781.5 485.7L781.5 482.5L781.5 482.5L781.6 480.0L781.9 477.8L782.3 475.6L782.9 473.7L783.7 471.9L784.7 470.2L785.8 468.7L787.0 467.3L788.4 466.1L790.0 465.0L791.7 464.0L793.6 463.2L795.6 462.5L797.7 462.0L797.7 462.0L799.9 461.6L801.9 461.6L803.7 461.8L805.5 462.2L807.2 462.7L808.7 463.3L808.7 463.3L808.5 465.2L808.3 467.1L808.1 469.0L807.9 470.9L807.7 472.8L807.7 472.8L806.3 472.0L804.9 471.4L803.5 471.0L802.2 470.9L800.8 470.9L799.5 471.1L799.5 471.1L798.4 471.4L797.4 471.8L796.4 472.2L795.5 472.7L794.7 473.4L794.0 474.0L793.4 474.8L792.8 475.6L792.3 476.6L791.9 477.6L791.6 478.6L791.4 479.8L791.3 481.0L791.2 482.3L791.2 482.3L791.2 485.2L791.2 488.1L791.2 491.0L791.2 493.8L791.2 496.7L791.2 496.7L794.5 496.0L797.8 495.3L801.0 494.6L804.2 493.8L807.4 493.1L807.4 493.1L807.4 494.8L807.4 496.5L807.4 498.2L807.4 499.9L807.4 501.6L807.4 501.6L804.2 502.4L801.0 503.1L797.8 503.9L794.5 504.6L791.2 505.3L791.2 505.3L791.2 518.9L791.2 532.4L791.2 546.0L791.2 559.6L791.2 573.2L791.2 573.2L789.3 573.6L787.4 574.0L785.4 574.4L783.5 574.7L781.5 575.1Z" fill="none" stroke="#f3f322" stroke-width="2.2" stroke-linejoin="round"/>
<path d="M734.1 582.9L734.1 569.3L734.1 555.7L734.1 542.2L734.1 528.6L734.1 515.0L734.1 515.0L731.9 515.3L729.7 515.7L727.5 516.0L725.3 516.4L723.2 516.7L723.2 516.7L723.2 515.0L723.2 513.3L723.2 511.6L723.2 509.9L723.2 508.2L723.2 508.2L725.3 507.8L727.5 507.5L729.7 507.1L731.9 506.8L734.1 506.4L734.1 506.4L734.1 503.2L734.1 500.0L734.1 496.7L734.1 493.5L734.1 490.3L734.1 490.3L734.2 487.8L734.4 485.6L734.9 483.5L735.5 481.5L736.3 479.7L737.3 478.1L738.4 476.6L739.7 475.3L741.2 474.1L742.8 473.0L744.6 472.2L746.6 471.4L748.6 470.8L750.9 470.4L750.9 470.4L753.2 470.2L755.3 470.3L757.3 470.6L759.2 471.1L760.9 471.7L762.6 472.5L762.6 472.5L762.4 474.4L762.2 476.2L762.0 478.1L761.7 480.0L761.5 481.8L761.5 481.8L760.0 480.9L758.5 480.3L757.0 479.8L755.6 479.6L754.2 479.5L752.8 479.6L752.8 479.6L751.6 479.9L750.5 480.2L749.5 480.6L748.6 481.1L747.7 481.6L747.0 482.3L746.3 483.0L745.7 483.8L745.2 484.7L744.8 485.7L744.5 486.8L744.3 487.9L744.1 489.2L744.1 490.5L744.1 490.5L744.1 493.3L744.1 496.2L744.1 499.1L744.1 502.0L744.1 504.9L744.1 504.9L747.5 504.3L750.9 503.8L754.4 503.2L757.8 502.7L761.2 502.1L761.2 502.1L761.2 503.8L761.2 505.5L761.2 507.3L761.2 509.0L761.2 510.7L761.2 510.7L757.8 511.2L754.4 511.8L750.9 512.3L747.5 512.9L744.1 513.4L744.1 513.4L744.1 527.0L744.1 540.6L744.1 554.2L744.1 567.7L744.1 581.3L744.1 581.3L742.1 581.6L740.1 582.0L738.1 582.3L736.1 582.6L734.1 582.9Z M781.7 575.3L781.7 561.7L781.7 548.2L781.7 534.6L781.7 521.0L781.7 507.4L781.7 507.4L779.5 507.8L777.3 508.1L775.2 508.5L773.0 508.8L770.8 509.1L770.8 509.1L770.8 507.4L770.8 505.7L770.8 504.0L770.8 502.3L770.8 500.6L770.8 500.6L773.0 500.3L775.2 499.9L777.3 499.6L779.5 499.2L781.7 498.9L781.7 498.9L781.7 495.6L781.7 492.4L781.7 489.2L781.7 485.9L781.7 482.7L781.7 482.7L781.8 480.3L782.1 478.0L782.5 475.9L783.2 473.9L784.0 472.1L784.9 470.5L786.1 469.0L787.4 467.7L788.8 466.5L790.5 465.5L792.3 464.6L794.2 463.9L796.3 463.3L798.5 462.8L798.5 462.8L800.8 462.6L802.9 462.7L804.9 463.0L806.8 463.5L808.6 464.2L810.3 464.9L810.3 464.9L810.0 466.8L809.8 468.7L809.6 470.5L809.4 472.4L809.1 474.3L809.1 474.3L807.6 473.4L806.1 472.7L804.7 472.2L803.2 472.0L801.8 471.9L800.4 472.1L800.4 472.1L799.2 472.3L798.2 472.6L797.1 473.0L796.2 473.5L795.4 474.1L794.6 474.7L793.9 475.4L793.4 476.3L792.9 477.2L792.5 478.1L792.1 479.2L791.9 480.4L791.8 481.6L791.7 482.9L791.7 482.9L791.7 485.8L791.7 488.6L791.7 491.5L791.7 494.4L791.7 497.3L791.7 497.3L795.1 496.7L798.6 496.2L802.0 495.6L805.4 495.1L808.9 494.5L808.9 494.5L808.9 496.3L808.9 498.0L808.9 499.7L808.9 501.4L808.9 503.1L808.9 503.1L805.4 503.6L802.0 504.2L798.6 504.7L795.1 505.3L791.7 505.8L791.7 505.8L791.7 519.4L791.7 533.0L791.7 546.6L791.7 560.2L791.7 573.7L791.7 573.7L789.7 574.1L787.7 574.4L785.7 574.7L783.7 575.0L781.7 575.3Z" fill="none" stroke="#55a8fa" stroke-width="2.2" stroke-dasharray="3 3" stroke-linejoin="round"/>
<g transform="translate(0 21)">
<!-- Plane2 label -->
<g transform="translate(476.5 389.5) matrix(1 -0.165 0 1 0 0)">
<text x="0" y="0" font-family="Liberation Sans, sans-serif" font-weight="bold" font-size="19.5" fill="#7f9de3" stroke="#7f9de3" stroke-width="1.6" stroke-linejoin="round" letter-spacing="1.7">Plane2</text>
<text x="0" y="0" font-family="Liberation Sans, sans-serif" font-weight="bold" font-size="19.5" fill="#7f9de3" stroke="#5f86df" stroke-width="0.4" letter-spacing="1.7">Plane2</text>
</g>
<!-- rotate glyph -->
<g transform="translate(776.2 350.6)">
<path d="M-6.4 -6.6 l3.2 1.2 l-1.4 2.4z" fill="#8a8a8a" stroke="#d8d8d8" stroke-width="0.6"/>
<circle cx="0" cy="0" r="5.7" fill="#9b9b9b" stroke="#e6eaf2" stroke-width="1.2"/>
<path d="M-2.6 -1.2 a3 3 0 1 0 3.4 -1.6" fill="none" stroke="#c9c9c9" stroke-width="1.5"/>
<path d="M-3 -2.6 h3 v2" fill="none" stroke="#7a7a7a" stroke-width="1.2"/>
</g>
<!-- triad -->
<g>
<path d="M39.8 823.5 L39.8 803" stroke="#0c7a1a" stroke-width="3.6"/>
<path d="M38.4 823.5 L38.4 803" stroke="#36a544" stroke-width="1"/>
<path d="M35.6 804.5 L39.9 796 L44.2 804.5 Q39.9 807 35.6 804.5Z" fill="#118a20"/>
<path d="M38.2 803 L39.9 797.5" stroke="#7fd58a" stroke-width="1.2"/>
<path d="M39 824.5 L20 828" stroke="#1a1ad0" stroke-width="3.4"/>
<path d="M39 823.4 L20 827" stroke="#6a6af5" stroke-width="0.9"/>
<path d="M21.5 823.6 L12.5 828.6 L22.5 832.2 Q19.5 828 21.5 823.6Z" fill="#1f1fe0"/>
<path d="M39.5 823.5 L47 831.5" stroke="#8c1010" stroke-width="3.6"/>
<ellipse cx="47.5" cy="832.5" rx="4.3" ry="3.6" fill="#c01414"/>
<ellipse cx="46.3" cy="831.3" rx="1.6" ry="1.2" fill="#e86a6a"/>
<path d="M36.6 787.5 L39.9 792 L43.3 787.5 M39.9 792 L39.9 796" fill="none" stroke="#157a25" stroke-width="1"/>
<path d="M6 824.5 H10.5 L6 832 H10.5" fill="none" stroke="#1515c5" stroke-width="1"/>
<path d="M50.5 834 L54.5 841.5 M55 834 L50 841.5" fill="none" stroke="#c01a1a" stroke-width="1"/>
</g>
<!-- confirmation corner -->
<g fill="none" stroke-linejoin="miter">
<path d="M1604.5 24 L1611.5 31.5 L1626.5 15.5" stroke="#8fc78f" stroke-width="4.4"/>
<path d="M1604.5 24 L1611.5 31.5 L1626.5 15.5" stroke="#aad4aa" stroke-width="2.4"/>
<path d="M1638.5 44.5 L1657.5 63.5 M1657.5 44.5 L1638.5 63.5" stroke="#d39a9a" stroke-width="3.8"/>
<path d="M1638.5 44.5 L1657.5 63.5 M1657.5 44.5 L1638.5 63.5" stroke="#dcabab" stroke-width="1.9"/>
</g>
<!-- MDI buttons -->
<rect x="1634" y="-6" width="9" height="3.6" fill="#8c8c98"/><rect x="1634" y="-3.6" width="9" height="1.5" fill="#4e4f60"/>
<g fill="none" stroke="#6c6c7c" stroke-width="1.5">
<path d="M1658.5 -10 v-2 h8.5 v7.5 h-2" /><path d="M1658.5 -11.4 h8.5" stroke-width="2.4"/>
<path d="M1655.8 -7.6 h8.6 v6.6 h-8.6z"/><path d="M1655.8 -6.6 h8.6" stroke-width="2.4"/>
</g>
<path d="M1680.5 -11.5 l9.5 9.5 M1690 -11.5 l-9.5 9.5" fill="none" stroke="#77778a" stroke-width="2.3"/>
</g>

</svg>
<div id="tabrow" class="a"></div>
<div id="tabrowL" class="a"></div>
<div class="a" style="left:65px;top:102px;width:688px;height:19.5px;background:#4f5375"></div>
<div class="a" style="left:66px;top:103px;width:56px;height:17.3px;background:linear-gradient(#c3c6db,#b7bbd2);box-shadow:inset 1px 1px 0 #d3d6e6"></div>
<div class="a" style="left:66px;top:104px;width:56px;height:17px;font-size:12px;line-height:17px;text-align:center;color:#484b62">Sketch</div>
<div class="a" style="left:123px;top:103px;width:64px;height:17.3px;background:linear-gradient(#c3c6db,#b7bbd2);box-shadow:inset 1px 1px 0 #d3d6e6"></div>
<div class="a" style="left:123px;top:104px;width:64px;height:17px;font-size:12px;line-height:17px;text-align:center;color:#484b62">Surfaces</div>
<div class="a" style="left:188px;top:103px;width:79px;height:17.3px;background:linear-gradient(#c3c6db,#b7bbd2);box-shadow:inset 1px 1px 0 #d3d6e6"></div>
<div class="a" style="left:188px;top:104px;width:79px;height:17px;font-size:12px;line-height:17px;text-align:center;color:#484b62">Sheet Metal</div>
<div class="a" style="left:268px;top:103px;width:78px;height:17.3px;background:linear-gradient(#c3c6db,#b7bbd2);box-shadow:inset 1px 1px 0 #d3d6e6"></div>
<div class="a" style="left:268px;top:104px;width:78px;height:17px;font-size:12px;line-height:17px;text-align:center;color:#484b62">Weldments</div>
<div class="a" style="left:347px;top:103px;width:62px;height:17.3px;background:linear-gradient(#c3c6db,#b7bbd2);box-shadow:inset 1px 1px 0 #d3d6e6"></div>
<div class="a" style="left:347px;top:104px;width:62px;height:17px;font-size:12px;line-height:17px;text-align:center;color:#484b62">Evaluate</div>
<div class="a" style="left:410px;top:103px;width:66px;height:17.3px;background:linear-gradient(#c3c6db,#b7bbd2);box-shadow:inset 1px 1px 0 #d3d6e6"></div>
<div class="a" style="left:410px;top:104px;width:66px;height:17px;font-size:12px;line-height:17px;text-align:center;color:#484b62">DimXpert</div>
<div class="a" style="left:477px;top:103px;width:98px;height:17.3px;background:linear-gradient(#c3c6db,#b7bbd2);box-shadow:inset 1px 1px 0 #d3d6e6"></div>
<div class="a" style="left:477px;top:104px;width:98px;height:17px;font-size:12px;line-height:17px;text-align:center;color:#484b62">Office Products</div>
<div class="a" style="left:576px;top:103px;width:74px;height:17.3px;background:linear-gradient(#c3c6db,#b7bbd2);box-shadow:inset 1px 1px 0 #d3d6e6"></div>
<div class="a" style="left:576px;top:104px;width:74px;height:17px;font-size:12px;line-height:17px;text-align:center;color:#484b62">Simulation</div>
<div class="a" style="left:651px;top:103px;width:101px;height:17.3px;background:linear-gradient(#c3c6db,#b7bbd2);box-shadow:inset 1px 1px 0 #d3d6e6"></div>
<div class="a" style="left:651px;top:104px;width:101px;height:17px;font-size:12px;line-height:17px;text-align:center;color:#484b62">Flow Simulation</div>
<div class="a" style="left:0px;top:102px;width:66px;height:21px;background:linear-gradient(#fafafd,#e9ebf4);border:1px solid #5b5e7d;border-top:none;border-radius:0 0 3px 3px;box-shadow:inset -1px 0 0 #cfd1df"></div>
<div class="a" style="left:65px;top:102px;width:1254px;height:1px;background:#5c5f7e"></div>
<div class="a" style="left:8.0px;top:106.2px;font-size:12px;line-height:12px;font-weight:700;color:#1a1a1a;letter-spacing:-0.07px;">Features</div>
<div id="left" class="a"></div>
<div id="split" class="a"></div>
<div class="a" style="left:0px;top:124px;width:187px;height:1px;background:#8f92a8"></div>
<div class="a" style="left:0px;top:126px;width:187px;height:1px;background:#b5b8cc"></div>
<div class="a" style="left:0px;top:131px;width:26.5px;height:22px;background:linear-gradient(#cfd2e2,#c3c6d9);border:1px solid #a2a5bd;border-bottom:none;border-radius:4px 4px 0 0"></div>
<div class="a" style="left:28.5px;top:130px;width:27px;height:24px;background:linear-gradient(#f3f4fa,#e9ebf4);border:1px solid #b9bcd0;border-bottom:none;border-radius:4px 4px 0 0"></div>
<div class="a" style="left:57px;top:131px;width:26.5px;height:22px;background:linear-gradient(#cfd2e2,#c3c6d9);border:1px solid #a2a5bd;border-bottom:none;border-radius:4px 4px 0 0"></div>
<div class="a" style="left:84.5px;top:131px;width:26.5px;height:22px;background:linear-gradient(#cfd2e2,#c3c6d9);border:1px solid #a2a5bd;border-bottom:none;border-radius:4px 4px 0 0"></div>
<div class="a" style="left:112.5px;top:131px;width:26.5px;height:22px;background:linear-gradient(#cfd2e2,#c3c6d9);border:1px solid #a2a5bd;border-bottom:none;border-radius:4px 4px 0 0"></div>
<div class="a" style="left:0px;top:152.5px;width:28px;height:1px;background:#f4f5fa"></div>
<div class="a" style="left:56px;top:152.5px;width:131px;height:1px;background:#f4f5fa"></div>
<div class="a" style="left:1px;top:156px;width:184.5px;height:22px;background:linear-gradient(#a3a6c0,#8486a5 30%,#6c6f90 55%,#8a8dab 80%,#9a9db8);border:1px solid #2b2e55;border-top-color:#5d6083;border-left-color:#5d6083"></div>
<div class="a" style="left:22.0px;top:161.0px;font-size:12px;line-height:12px;font-weight:700;color:#fff;letter-spacing:1.11px;text-shadow:0 0 1px #fff">Wrap2</div>
<div class="a" style="left:169.5px;top:160.7px;font-size:13px;line-height:13px;font-weight:700;color:#fff;">?</div>
<div class="a" style="left:3px;top:213.3px;width:180.5px;height:198.7px;border:1px solid #a9acc2;background:#ebecf5"></div>
<div class="a" style="left:4px;top:214.3px;width:178.5px;height:18.2px;background:linear-gradient(#eff0f6,#d9dce8 50%,#c8ccdc);border-bottom:1px solid #a9acc2"></div>
<div class="a" style="left:8.5px;top:218.1px;font-size:11px;line-height:11px;font-weight:700;color:#353a5c;letter-spacing:0.61px;">Wrap Parameters</div>
<svg class="a" style="left:168px;top:218px" width="10" height="11" viewBox="0 0 10 11"><path d="M1 5.5L5 1.5L9 5.5M1 10L5 6L9 10" fill="none" stroke="#2e3358" stroke-width="1.3"/></svg>
<div class="a" style="left:3px;top:420.3px;width:180.5px;height:54.2px;border:1px solid #a9acc2;background:#ebecf5"></div>
<div class="a" style="left:4px;top:421.3px;width:178.5px;height:18.7px;background:linear-gradient(#eff0f6,#d9dce8 50%,#c8ccdc);border-bottom:1px solid #a9acc2"></div>
<div class="a" style="left:8.5px;top:425.1px;font-size:11px;line-height:11px;font-weight:700;color:#353a5c;letter-spacing:0.15px;">Pull Direction</div>
<svg class="a" style="left:168px;top:425px" width="10" height="11" viewBox="0 0 10 11"><path d="M1 5.5L5 1.5L9 5.5M1 10L5 6L9 10" fill="none" stroke="#2e3358" stroke-width="1.3"/></svg>
<div class="a" style="left:3px;top:482.3px;width:180.5px;height:74.2px;border:1px solid #a9acc2;background:#ebecf5"></div>
<div class="a" style="left:4px;top:483.3px;width:178.5px;height:18.7px;background:linear-gradient(#eff0f6,#d9dce8 50%,#c8ccdc);border-bottom:1px solid #a9acc2"></div>
<div class="a" style="left:8.5px;top:487.1px;font-size:11px;line-height:11px;font-weight:700;color:#353a5c;letter-spacing:0.28px;">Source Sketch</div>
<svg class="a" style="left:168px;top:487px" width="10" height="11" viewBox="0 0 10 11"><path d="M1 5.5L5 1.5L9 5.5M1 10L5 6L9 10" fill="none" stroke="#2e3358" stroke-width="1.3"/></svg>
<div class="a" style="left:40px;top:238.2px;width:11.6px;height:11.6px;border-radius:50%;border:1px solid #7d8192;background:radial-gradient(circle at 35% 35%,#ffffff,#e4e5ea 70%,#d2d3da)"></div>
<div class="a" style="left:55.5px;top:238.9px;font-size:11px;line-height:11px;color:#15172a;letter-spacing:-0.71px;">Emboss</div>
<div class="a" style="left:40px;top:259.5px;width:11.6px;height:11.6px;border-radius:50%;border:1px solid #7d8192;background:radial-gradient(circle at 35% 35%,#ffffff,#e4e5ea 70%,#d2d3da)"></div>
<div class="a" style="left:55.5px;top:260.2px;font-size:11px;line-height:11px;color:#15172a;letter-spacing:-0.38px;">Deboss</div>
<div class="a" style="left:40px;top:281.2px;width:11.6px;height:11.6px;border-radius:50%;border:1px solid #7d8192;background:radial-gradient(circle at 35% 35%,#ffffff,#e4e5ea 70%,#d2d3da)"></div>
<div class="a" style="left:55.5px;top:281.9px;font-size:11px;line-height:11px;color:#15172a;letter-spacing:-0.45px;">Scribe</div>
<div class="a" style="left:43.2px;top:241.4px;width:5.2px;height:5.2px;border-radius:50%;background:radial-gradient(circle at 40% 35%,#5aa0e8,#0b3f95)"></div>
<div class="a" style="left:40px;top:303px;width:136px;height:44px;border:2px solid #6cb2ee;background:#cfe3f8;box-shadow:inset 0 0 0 1px #b5d6f5"></div>
<div class="a" style="left:44.0px;top:307.9px;font-size:11px;line-height:11px;color:#15172a;letter-spacing:0.23px;">Face&lt;1&gt;</div>
<div class="a" style="left:41.5px;top:355.5px;width:119px;height:22px;border:1px solid #c9ccda;background:#fff;border-top-color:#a9acbd"></div>
<div class="a" style="left:47.5px;top:359.9px;font-size:11px;line-height:11px;color:#333;letter-spacing:-0.54px;">1.00mm</div>
<div class="a" style="left:161px;top:355.5px;width:14px;height:22px;background:#eceef5"></div>
<svg class="a" style="left:164.5px;top:359px" width="7" height="17" viewBox="0 0 7 17"><path d="M0.5 4h6l-3 -3.5zM0.5 13h6l-3 3.5z" fill="#222"/></svg>
<div class="a" style="left:41.3px;top:391px;width:12px;height:12px;border:1px solid #8a8d9b;background:linear-gradient(135deg,#dcdde3,#fff 70%);box-shadow:inset 0 0 0 1px #f2f2f5"></div>
<div class="a" style="left:56.5px;top:391.9px;font-size:11px;line-height:11px;color:#15172a;letter-spacing:-0.12px;">Reverse direction</div>
<div class="a" style="left:43px;top:443.5px;width:136px;height:22.5px;border:1px solid #8c8fa6;background:#fff"></div>
<div class="a" style="left:43px;top:505.5px;width:136px;height:43.5px;border:1px solid #8c8fa6;background:#fff"></div>
<div class="a" style="left:47.5px;top:509.9px;font-size:11px;line-height:11px;color:#333;letter-spacing:-0.18px;">Sketch7</div>
<svg class="a" style="left:186px;top:540px" width="10" height="30" viewBox="0 0 10 30"><path d="M1.5 0.5h4.5q3 0 3 3v22q0 3 -3 3h-4.5z" fill="#e9ebf4" stroke="#62657f" stroke-width="1"/><path d="M6.5 6.5v5l-3.5-2.5zM6.5 12.5v5l-3.5-2.5zM6.5 18.5v5l-3.5-2.5z" fill="#5a5d9a"/></svg>
<div class="a" style="left:191.5px;top:130.5px;width:9px;height:9px;border:1px solid #8c8c8c;background:linear-gradient(#e4e4e4,#c6c6c6)"></div>
<svg class="a" style="left:191.5px;top:130.5px" width="9" height="9" viewBox="0 0 9 9"><path d="M2 4.5h5M4.5 2v5" stroke="#000" stroke-width="1"/></svg>
<div class="a" style="left:200.5px;top:134.5px;width:5.5px;height:1px;background:#8a8a8a"></div>
<div class="a" style="left:227.0px;top:130.5px;font-size:11px;line-height:11px;color:#111;letter-spacing:0.37px;white-space:pre;">Part1  (Default&lt;&lt;Default&gt;_...</div>
<svg class="a" style="left:4.8px;top:133.6px;overflow:visible" width="16" height="16" viewBox="0 0 16 16" ><polygon points="0.0,1.8 4.4,1.0 5.4,0.4 9.0,0.0 11.4,2.0 11.4,6.0 15.4,9.2 15.4,12.6 10.2,15.6 0.0,6.2" fill="#f2c81c" stroke="#1a1000" stroke-width="1.2" stroke-linejoin="round"/><polygon points="0.0,1.8 10.2,11.0 10.2,15.6 0.0,6.2" fill="#f8e630"/><polygon points="10.2,11.0 15.4,9.2 15.4,12.6 10.2,15.6" fill="#f4c814"/><polygon points="6.4,7.4 11.4,6.0 15.4,9.2 10.2,11.0" fill="#e6ac20"/><polygon points="6.2,2.6 11.4,2.0 11.4,6.0 6.4,7.4" fill="#f2c232"/><polygon points="4.4,1.0 5.4,0.4 9.0,0.0 11.4,2.0 6.2,2.6" fill="#f6e25a"/><polygon points="4.4,1.0 6.2,2.6 6.4,7.4 4.4,5.4" fill="#fbf08a"/><polygon points="0.0,1.8 4.4,1.0 4.4,5.4" fill="#eccb3a"/><polyline points="0.0,1.8 4.4,5.4 6.4,7.4 10.2,11.0 10.2,15.6" fill="none" stroke="#1a1000" stroke-width="1"/><polyline points="4.4,1.0 4.4,5.4" fill="none" stroke="#1a1000" stroke-width="1"/><polyline points="6.2,2.6 6.4,7.4" fill="none" stroke="#1a1000" stroke-width="1"/><polyline points="10.2,11.0 15.4,9.2" fill="none" stroke="#1a1000" stroke-width="1"/><polyline points="11.4,6.0 6.4,7.4" fill="none" stroke="#6a4a00" stroke-width="0.6"/><ellipse cx="7.6" cy="0.6" rx="2" ry="0.7" fill="#b8a000"/></svg>
<svg class="a" style="left:33px;top:134px;overflow:visible" width="17" height="17" viewBox="0 0 17 17" ><rect x="0.8" y="5" width="13" height="10.6" fill="#fff" stroke="#4c5070" stroke-width="1"/><rect x="0.8" y="5" width="13" height="2.2" fill="#7a86b8"/><rect x="2.6" y="8.4" width="2.6" height="2.4" fill="#f0c040" stroke="#806010" stroke-width="0.6"/><rect x="2.6" y="12" width="2.6" height="2.2" fill="#fff" stroke="#7a7ea0" stroke-width="0.6"/><path d="M6.6 9.6h5.4M6.6 13h5.4" stroke="#8fb0d8" stroke-width="1.4"/><path d="M4.6 5 L8.6 0.8 L12.4 5" fill="#f8f0d8" stroke="#6a5a3a" stroke-width="0.8"/><path d="M9.6 2 q3-2.6 6.8-1 l-0.4 2.6 q-2.4-0.8-4 1z" fill="#f0c890" stroke="#8a6a3a" stroke-width="0.7"/></svg>
<svg class="a" style="left:61px;top:134px;overflow:visible" width="17" height="17" viewBox="0 0 17 17" ><path d="M2.4 0.6v15M2.4 4.6h5M2.4 12.6h7" stroke="#222" stroke-width="1.1"/><path d="M4.6 0.6v15" stroke="#9a9cae" stroke-width="0.8"/><rect x="6.6" y="1.6" width="6.2" height="6" rx="1.4" fill="#f6cf16" stroke="#1a1600" stroke-width="1.1"/><rect x="9.6" y="9.6" width="6.2" height="6" rx="1.4" fill="#f6cf16" stroke="#1a1600" stroke-width="1.1"/><rect x="8" y="3" width="2.6" height="2" fill="#fff39a"/><rect x="11" y="11" width="2.6" height="2" fill="#fff39a"/></svg>
<svg class="a" style="left:89px;top:133.5px;overflow:visible" width="17" height="17" viewBox="0 0 17 17" ><g fill="none" stroke="#c455e6" stroke-width="1.7"><circle cx="8.4" cy="8.4" r="5"/><path d="M8.4 0.6v15.6M0.6 8.4h15.6"/></g></svg>
<svg class="a" style="left:117px;top:133.5px;overflow:visible" width="17" height="17" viewBox="0 0 17 17" ><defs><clipPath id="sp"><circle cx="8.4" cy="8.4" r="7.8"/></clipPath><radialGradient id="spg" cx="0.35" cy="0.3" r="0.75"><stop offset="0" stop-color="#fff" stop-opacity="0.75"/><stop offset="0.35" stop-color="#fff" stop-opacity="0"/><stop offset="1" stop-color="#000" stop-opacity="0.35"/></radialGradient></defs>
<g clip-path="url(#sp)"><rect width="17" height="17" fill="#e01c1c"/><path d="M0 0H7L6 9 L0 10Z" fill="#2a3fd8"/><path d="M0 9.4 L6 8.6 L5 17H0Z" fill="#1fae2c"/><path d="M5 17 L6 9 L17 9.6V17Z" fill="#f6dc10"/><ellipse cx="12" cy="5" rx="2.4" ry="3.6" fill="#150808" transform="rotate(-25 12 5)"/></g><circle cx="8.4" cy="8.4" r="7.8" fill="url(#spg)"/></svg>
<svg class="a" style="left:3px;top:157.5px;overflow:visible" width="17" height="18" viewBox="0 0 17 18" ><path d="M0.8 4 Q0.8 0.8 8.2 0.8 Q15.6 0.8 15.6 4 V13.4 Q15.6 16.8 8.2 16.8 Q0.8 16.8 0.8 13.4Z" fill="#f2cc12" stroke="#2a2200" stroke-width="1.1"/><ellipse cx="8.2" cy="4" rx="7.4" ry="3" fill="#ffe95a" stroke="#2a2200" stroke-width="0.9"/><path d="M1.4 7.6 Q8.2 10.8 15 7.6 V13 Q8.2 16.2 1.4 13Z" fill="#129a1e" stroke="#0a3a0a" stroke-width="0.7"/><text x="3.2" y="14.2" font-family="Liberation Sans" font-weight="bold" font-size="6.6" fill="#0a2a0a" stroke="#0a2a0a" stroke-width="0.3">3D</text></svg>
<svg class="a" style="left:3px;top:184px;overflow:visible" width="18" height="16" viewBox="0 0 18 16" ><path d="M1.6 8.4 L4 6 L6.8 9.2 L14.6 1.6 L16.8 3.8 L6.6 14.2Z" fill="#22d222" stroke="#0c560c" stroke-width="1" stroke-linejoin="round"/><path d="M3.8 8 L6.8 11.4 L14.8 3.4" fill="none" stroke="#7cf27c" stroke-width="1"/></svg>
<svg class="a" style="left:30px;top:184px;overflow:visible" width="16" height="16" viewBox="0 0 16 16" ><path d="M1.2 3.4 L3.4 1.2 L7.6 5.4 L11.8 1.2 L14 3.4 L9.8 7.6 L14 11.8 L11.8 14 L7.6 9.8 L3.4 14 L1.2 11.8 L5.4 7.6Z" fill="#e01a1a" stroke="#6e0a0a" stroke-width="0.9" stroke-linejoin="round"/><path d="M3.2 3 L12 11.8" stroke="#ff6a6a" stroke-width="0.9"/></svg>
<svg class="a" style="left:14px;top:306.5px;overflow:visible" width="18" height="18" viewBox="0 0 18 18" ><defs><linearGradient id="yg" x1="0" y1="0" x2="1" y2="1"><stop offset="0" stop-color="#fff23a"/><stop offset="1" stop-color="#ffae00"/></linearGradient></defs>
<path d="M0.8 4 L4.6 0.8 H13 L16.6 4.8 V16.6 H5 L0.8 12.8Z" fill="#ffe62a" stroke="#5e5200" stroke-width="1" stroke-linejoin="round"/><path d="M0.8 4 L4.6 0.8 H13 L16.6 4.8 H5Z" fill="#2ec23e" stroke="#1a6a1a" stroke-width="0.7"/><rect x="5" y="4.8" width="11.6" height="11.8" fill="url(#yg)" stroke="#5e5200" stroke-width="0.9"/></svg>
<svg class="a" style="left:11px;top:356px;overflow:visible" width="22" height="22" viewBox="0 0 22 22" ><path d="M12 1 L20 9 M1 12 L9 20" stroke="#111" stroke-width="1.2"/><path d="M6.4 14.6 L14.4 6.6" stroke="#2450c8" stroke-width="1.4"/><path d="M4.6 16.4 L6 11.6 L9.4 15Z M16.2 4.8 L14.8 9.6 L11.4 6.2Z" fill="#2450c8"/><text x="11.4" y="20.6" font-family="Liberation Sans" font-weight="bold" font-size="8.6" fill="#111">T1</text></svg>
<svg class="a" style="left:15px;top:447px;overflow:visible" width="15" height="15" viewBox="0 0 15 15" ><path d="M1.6 13.4 L10 5" stroke="#1c4ec6" stroke-width="2.2"/><path d="M13.8 1.2 L6.4 3.4 L11.6 8.6Z" fill="#1c4ec6"/></svg>
<svg class="a" style="left:12px;top:507px;overflow:visible" width="20" height="20" viewBox="0 0 20 20" ><path d="M9.6 1.4 H1.6 V15.4 Q1.6 18.4 4.6 18.4 H18.6" fill="none" stroke="#2a44b8" stroke-width="1.1"/><path d="M2 14.6 L4.6 11.4 L15.4 6.6 L17 9.6 L6 14.6Z" fill="#f6d622" stroke="#5a4a00" stroke-width="0.7"/><path d="M15.4 6.6 Q17.4 5.4 18 7 Q18.4 8.8 17 9.6Z" fill="#e8707a" stroke="#8a2a2a" stroke-width="0.6"/><path d="M2 14.6 L4.6 11.4 L6 14.6Z" fill="#3a3000"/><path d="M5 12.2 L15.8 7.4" stroke="#fff6a0" stroke-width="0.8"/></svg>
<svg class="a" style="left:206.2px;top:126px;overflow:visible" width="16" height="16" viewBox="0 0 16 16" ><polygon points="0.0,1.8 4.4,1.0 5.4,0.4 9.0,0.0 11.4,2.0 11.4,6.0 15.4,9.2 15.4,12.6 10.2,15.6 0.0,6.2" fill="#f2c81c" stroke="#1a1000" stroke-width="1.2" stroke-linejoin="round"/><polygon points="0.0,1.8 10.2,11.0 10.2,15.6 0.0,6.2" fill="#f8e630"/><polygon points="10.2,11.0 15.4,9.2 15.4,12.6 10.2,15.6" fill="#f4c814"/><polygon points="6.4,7.4 11.4,6.0 15.4,9.2 10.2,11.0" fill="#e6ac20"/><polygon points="6.2,2.6 11.4,2.0 11.4,6.0 6.4,7.4" fill="#f2c232"/><polygon points="4.4,1.0 5.4,0.4 9.0,0.0 11.4,2.0 6.2,2.6" fill="#f6e25a"/><polygon points="4.4,1.0 6.2,2.6 6.4,7.4 4.4,5.4" fill="#fbf08a"/><polygon points="0.0,1.8 4.4,1.0 4.4,5.4" fill="#eccb3a"/><polyline points="0.0,1.8 4.4,5.4 6.4,7.4 10.2,11.0 10.2,15.6" fill="none" stroke="#1a1000" stroke-width="1"/><polyline points="4.4,1.0 4.4,5.4" fill="none" stroke="#1a1000" stroke-width="1"/><polyline points="6.2,2.6 6.4,7.4" fill="none" stroke="#1a1000" stroke-width="1"/><polyline points="10.2,11.0 15.4,9.2" fill="none" stroke="#1a1000" stroke-width="1"/><polyline points="11.4,6.0 6.4,7.4" fill="none" stroke="#6a4a00" stroke-width="0.6"/><ellipse cx="7.6" cy="0.6" rx="2" ry="0.7" fill="#b8a000"/></svg>
<svg class="a" style="left:900px;top:108px;overflow:visible" width="19" height="18" viewBox="0 0 19 18" ><circle cx="7" cy="6.8" r="5.6" fill="#e6e6e8" stroke="#55575f" stroke-width="1.3"/><path d="M11.4 11.2 L16.4 15.6" stroke="#3f7fd4" stroke-width="2.8" stroke-linecap="round"/><path d="M11.4 11.2 L16.4 15.6" stroke="#a9d0f8" stroke-width="1"/><path d="M4.4 5.4v-1.6h1.8M9.6 3.8h-1.8M9.6 3.8v1.6M4.4 8.2v1.6h1.8M9.6 8.2v1.6h-1.8" fill="none" stroke="#333" stroke-width="1"/></svg>
<svg class="a" style="left:923px;top:108px;overflow:visible" width="19" height="18" viewBox="0 0 19 18" ><circle cx="7.4" cy="6.8" r="5.8" fill="#e6e6e8" stroke="#55575f" stroke-width="1.3" stroke-dasharray="2 1.2"/><path d="M11.8 11.2 L16.8 15.8" stroke="#3f7fd4" stroke-width="2.8" stroke-linecap="round"/><path d="M11.8 11.2 L16.8 15.8" stroke="#a9d0f8" stroke-width="1"/><path d="M4.6 8.8h5.2v-4.6" fill="none" stroke="#333" stroke-width="1" stroke-dasharray="2 1"/></svg>
<svg class="a" style="left:946px;top:108px;overflow:visible" width="19" height="18" viewBox="0 0 19 18" ><path d="M2 2.8 L12.6 14" stroke="#2f74c8" stroke-width="5" stroke-linecap="round"/><path d="M2.4 2.4 L12 12.6" stroke="#9fd0fa" stroke-width="2"/><ellipse cx="12.8" cy="14" rx="3" ry="2.2" fill="#d8ecff" stroke="#2f74c8" stroke-width="0.9" transform="rotate(45 12.8 14)"/><path d="M17.6 4.2 H11 M13.6 1.6 L10.6 4.2 L13.6 6.8" fill="none" stroke="#2a62c0" stroke-width="1.4"/></svg>
<svg class="a" style="left:970px;top:109px;overflow:visible" width="16" height="16" viewBox="0 0 16 16" ><path d="M0.8 3.4 Q0.8 0.6 7.6 0.6 Q14.6 0.6 14.6 3.4 V12.6 Q14.6 15 10.6 15.2 V9.6 Q7.6 6.6 4.6 9.6 V15.2 Q0.8 15 0.8 12.6Z" fill="#a9a9ab" stroke="#9d9d9f" stroke-width="0.8"/><path d="M2.6 4v9M5 4.6v4M10.4 4.6v4M12.8 4v9" stroke="#b9b9bb" stroke-width="0.9" stroke-dasharray="1 1"/></svg>
<svg class="a" style="left:992px;top:108px;overflow:visible" width="18" height="17" viewBox="0 0 18 17" ><defs><linearGradient id="bq" x1="0" y1="0" x2="1" y2="1"><stop offset="0" stop-color="#b5d8f6"/><stop offset="1" stop-color="#3f8ad6"/></linearGradient></defs>
<path d="M1 6 L5.6 1 H16.6 V11 L12 16.2 H1Z" fill="#fff" stroke="#2a2a2a" stroke-width="1"/><path d="M12 6 L16.6 1" stroke="#2a2a2a" stroke-width="0.9"/><rect x="1" y="6" width="11" height="10.2" fill="url(#bq)" stroke="#2a66b8" stroke-width="1"/><path d="M8.8 1.6v3.6M7.4 3.6h3.2M13 9.4h3.2M14.2 7.8 L13 9.4 L14.2 11" fill="none" stroke="#e01818" stroke-width="1.1"/></svg>
<svg class="a" style="left:1013px;top:117px;overflow:visible" width="6" height="4" viewBox="0 0 6 4" ><path d="M0 0h6l-3 3.4z" fill="#55586c"/></svg>
<svg class="a" style="left:1025px;top:108px;overflow:visible" width="18" height="17" viewBox="0 0 18 17" ><defs><linearGradient id="bq2" x1="0" y1="0" x2="1" y2="0"><stop offset="0" stop-color="#9cc6f2"/><stop offset="1" stop-color="#3a7fd0"/></linearGradient></defs>
<path d="M1 5.6 L5.6 1 H17 V11.4 L12.4 16.2 H1Z" fill="#5f9ae0" stroke="#2a2a2a" stroke-width="1"/><path d="M1 5.6 L5.6 1 H17 L12.4 5.6Z" fill="#a9cdf4"/><rect x="1" y="5.6" width="11.4" height="10.6" fill="#f4f6fa" stroke="#2a2a2a" stroke-width="1"/><rect x="6.6" y="6.2" width="5.4" height="9.6" fill="url(#bq2)"/></svg>
<svg class="a" style="left:1046px;top:117px;overflow:visible" width="6" height="4" viewBox="0 0 6 4" ><path d="M0 0h6l-3 3.4z" fill="#55586c"/></svg>
<svg class="a" style="left:1058px;top:110px;overflow:visible" width="18" height="15" viewBox="0 0 18 15" ><path d="M2.4 5.6 Q2 1.6 5.4 1 M11 8.6 Q12 5.6 16 4.6 Q17.4 4.6 17 6.2" fill="none" stroke="#5a5a62" stroke-width="1.1"/><ellipse cx="4.4" cy="8" rx="3" ry="3.8" fill="#c3dcf6" stroke="#5a5a62" stroke-width="1.1" transform="rotate(-15 4.4 8)"/><ellipse cx="11.2" cy="10.6" rx="2.9" ry="3.6" fill="#c3dcf6" stroke="#5a5a62" stroke-width="1.1" transform="rotate(-15 11.2 10.6)"/><path d="M7.2 8.4 Q8 7.6 8.6 9" fill="none" stroke="#5a5a62" stroke-width="1"/></svg>
<svg class="a" style="left:1079px;top:117px;overflow:visible" width="6" height="4" viewBox="0 0 6 4" ><path d="M0 0h6l-3 3.4z" fill="#55586c"/></svg>
<svg class="a" style="left:1092px;top:109px;overflow:visible" width="17" height="17" viewBox="0 0 17 17" ><defs><radialGradient id="gs" cx="0.4" cy="0.35" r="0.7"><stop offset="0" stop-color="#b3b3b3"/><stop offset="1" stop-color="#a3a3a3"/></radialGradient></defs><circle cx="8.2" cy="8.2" r="7.9" fill="url(#gs)"/></svg>
<svg class="a" style="left:1115px;top:108px;overflow:visible" width="17" height="17" viewBox="0 0 17 17" ><circle cx="8.2" cy="6.4" r="6" fill="#a6a6a6"/><path d="M0.4 9.6 L3.4 8.4 H13 L16 9.6 V16.4 H0.4Z" fill="#a9a9a9"/><path d="M0.4 11h3v2.6h-3zM6.6 11h3v2.6h-3zM13 11h3v2.6h-3zM3.4 13.6h3.2v2.8H3.4zM9.6 13.6h3.4v2.8H9.6z" fill="#b8b8b8"/></svg>
<svg class="a" style="left:1135px;top:117px;overflow:visible" width="6" height="4" viewBox="0 0 6 4" ><path d="M0 0h6l-3 3.4z" fill="#55586c"/></svg>
<svg class="a" style="left:1147px;top:108px;overflow:visible" width="18" height="18" viewBox="0 0 18 18" ><rect x="1" y="2.4" width="14" height="11" fill="#d6d8de" stroke="#2a2a30" stroke-width="1.3"/><rect x="2.8" y="4.4" width="10.4" height="7" fill="#c9ccd4" stroke="#6a6c78" stroke-width="0.7"/><path d="M3.4 9.4 L6.6 5.4 L8.6 8 L10.6 5.6 L12.6 9" fill="none" stroke="#8a6a3a" stroke-width="0.9"/><path d="M8 13.4v2.4M3.6 16.6 L5.4 15.6 H10.6 L12.4 16.6" fill="none" stroke="#3a3a40" stroke-width="1"/><path d="M8.6 2.4 q3.6-2.6 7.6-0.8 l-0.6 2.8 q-2.8-1-4.6 0.8z" fill="#f6c46a" stroke="#a8782a" stroke-width="0.6"/></svg>
<svg class="a" style="left:1168px;top:117px;overflow:visible" width="6" height="4" viewBox="0 0 6 4" ><path d="M0 0h6l-3 3.4z" fill="#55586c"/></svg>
<div id="right" class="a"></div>
<div class="a" style="left:1890px;top:103px;width:1px;height:919px;background:#7c7f96"></div>
<div class="a" style="left:1891px;top:102px;width:29px;height:137px;background:linear-gradient(90deg,#f1f2f9,#e0e3ef 45%,#b4b8cf);border-bottom:1px solid #b0b3c8"></div>
<div class="a" style="left:1891px;top:240px;width:29px;height:782px;background:linear-gradient(90deg,rgba(255,255,255,0.25),rgba(255,255,255,0) 40%,rgba(0,0,0,0.02)),linear-gradient(#e6e8f3,#d6d9e9 40%,#c1c5d9 90%)"></div>
<div class="a" style="left:1867.5px;top:163.5px;width:23.5px;height:23.5px;background:linear-gradient(#f5f6fb,#e4e6f1);border:1px solid #9b9eb6;border-right:none;border-radius:4px 0 0 4px"></div>
<div class="a" style="left:1867.5px;top:188px;width:23.5px;height:22.5px;background:linear-gradient(#cdd0e1,#bfc3d8);border:1px solid #8f92ad;border-right:none;border-radius:4px 0 0 4px"></div>
<div class="a" style="left:1867.5px;top:212px;width:23.5px;height:22.5px;background:linear-gradient(#cdd0e1,#bfc3d8);border:1px solid #8f92ad;border-right:none;border-radius:4px 0 0 4px"></div>
<div class="a" style="left:1867.5px;top:236px;width:23.5px;height:22.5px;background:linear-gradient(#cdd0e1,#bfc3d8);border:1px solid #8f92ad;border-right:none;border-radius:4px 0 0 4px"></div>
<div class="a" style="left:1867.5px;top:260px;width:23.5px;height:22.5px;background:linear-gradient(#cdd0e1,#bfc3d8);border:1px solid #8f92ad;border-right:none;border-radius:4px 0 0 4px"></div>
<div class="a" style="left:1867.5px;top:284px;width:23.5px;height:22.5px;background:linear-gradient(#cdd0e1,#bfc3d8);border:1px solid #8f92ad;border-right:none;border-radius:4px 0 0 4px"></div>
<svg class="a" style="left:1895px;top:108px;overflow:visible" width="24" height="3" viewBox="0 0 24 3" ><rect x="1" y="0.4" width="1.6" height="1.6" fill="#fff"/><rect x="0.4" y="0" width="1.4" height="1.4" fill="#8c8fa8"/><rect x="4.4" y="0.4" width="1.6" height="1.6" fill="#fff"/><rect x="3.8000000000000003" y="0" width="1.4" height="1.4" fill="#8c8fa8"/><rect x="7.8" y="0.4" width="1.6" height="1.6" fill="#fff"/><rect x="7.2" y="0" width="1.4" height="1.4" fill="#8c8fa8"/><rect x="11.2" y="0.4" width="1.6" height="1.6" fill="#fff"/><rect x="10.6" y="0" width="1.4" height="1.4" fill="#8c8fa8"/><rect x="14.6" y="0.4" width="1.6" height="1.6" fill="#fff"/><rect x="14.0" y="0" width="1.4" height="1.4" fill="#8c8fa8"/><rect x="18" y="0.4" width="1.6" height="1.6" fill="#fff"/><rect x="17.4" y="0" width="1.4" height="1.4" fill="#8c8fa8"/><rect x="21.4" y="0.4" width="1.6" height="1.6" fill="#fff"/><rect x="20.799999999999997" y="0" width="1.4" height="1.4" fill="#8c8fa8"/></svg>
<svg class="a" style="left:1898px;top:120px;overflow:visible" width="15" height="18" viewBox="0 0 15 18" ><path d="M1 6 L4.6 3.6 V1.6 Q7.4 0 10 1.6 V3.6 L13.6 6 V15 L10.6 16.6 V9 L7.4 7 L4.2 9 V15 L1 13.6Z" fill="#dcdfe9" stroke="#adb0c2" stroke-width="1"/><path d="M4.6 3.6 L7.4 5 L10 3.6 M7.4 5 V7" fill="none" stroke="#adb0c2" stroke-width="0.8"/></svg>
<svg class="a" style="left:1897px;top:143px;overflow:visible" width="16" height="18" viewBox="0 0 16 18" ><path d="M1 5.6 L6.6 1 H13.6 V16 L10 14.6 V5.6 H6.2 L4.6 7.6Z" fill="#dcdfe9" stroke="#adb0c2" stroke-width="1"/><path d="M10 5.6 L13.6 3 M6.2 5.6 V8" fill="none" stroke="#adb0c2" stroke-width="0.8"/></svg>
<svg class="a" style="left:1898px;top:166px;overflow:visible" width="16" height="18" viewBox="0 0 16 18" ><path d="M1 1.6 H8.6 Q12.6 1.6 12.6 5 V14 L9.6 15.6 H1Z" fill="#dcdfe9" stroke="#adb0c2" stroke-width="1"/><path d="M3 3.6 H10 Q14.6 3.6 14.6 7 V16 H11.4 V10.6 L9 9 L6.6 10.6 V16 H3Z" fill="#dcdfe9" stroke="#adb0c2" stroke-width="1"/><path d="M6.6 6 L9 8 L11.4 6" fill="none" stroke="#adb0c2" stroke-width="0.8"/></svg>
<svg class="a" style="left:1898px;top:190px;overflow:visible" width="16" height="16" viewBox="0 0 16 16" ><rect x="0.8" y="0.8" width="14" height="14" fill="#dcdfe9" stroke="#adb0c2" stroke-width="1"/><path d="M7.8 0.8v14M0.8 7.8h14" stroke="#adb0c2" stroke-width="0.9"/><circle cx="4.4" cy="4.4" r="2.2" fill="none" stroke="#adb0c2" stroke-width="0.8"/><circle cx="11.2" cy="4.4" r="2.2" fill="none" stroke="#adb0c2" stroke-width="0.8"/><circle cx="4.4" cy="11.2" r="2.2" fill="none" stroke="#adb0c2" stroke-width="0.8"/><circle cx="11.2" cy="11.2" r="2.2" fill="none" stroke="#adb0c2" stroke-width="0.8"/></svg>
<svg class="a" style="left:1897px;top:212px;overflow:visible" width="17" height="17" viewBox="0 0 17 17" ><path d="M3 1 H10 Q13 1 13 4 V8 H16 V14.6 L6 16 L1 13.6 V8.6 L3 7.6Z" fill="#dcdfe9" stroke="#adb0c2" stroke-width="1"/><path d="M3 4 H13 M1 8.6 L6 10 H16 M6 10 V16 M3 7.6 H13" fill="none" stroke="#adb0c2" stroke-width="0.8"/></svg>
<svg class="a" style="left:1872px;top:167px;overflow:visible" width="16" height="17" viewBox="0 0 16 17" ><path d="M11.4 1.6h1.8v4" fill="none" stroke="#e02020" stroke-width="1.8"/><path d="M3 7.6 V15.6 H12.6 V7.6 L7.8 2.8Z" fill="#fbe672" stroke="#3a2a00" stroke-width="0.9"/><path d="M0.9 8.6 L7.8 1.6 L14.7 8.6" fill="none" stroke="#3a2a00" stroke-width="2.4" stroke-linejoin="miter"/><path d="M0.9 8.6 L7.8 1.6 L14.7 8.6" fill="none" stroke="#f8d21a" stroke-width="1.1"/><rect x="6" y="9.4" width="3.6" height="6.2" fill="#f4c000" stroke="#3a2a00" stroke-width="0.9"/><rect x="7.6" y="11.6" width="1.2" height="1.6" fill="#3a2a00"/></svg>
<svg class="a" style="left:1871px;top:190px;overflow:visible" width="17" height="17" viewBox="0 0 17 17" ><path d="M0.8 9 L4 6.6 L7 8 V16 H0.8Z" fill="#1c9a2c" stroke="#062a0a" stroke-width="0.9"/><path d="M5.4 6 L8 3.6 L11 5.6 V16 H6.4Z" fill="#f0c81c" stroke="#2a2000" stroke-width="0.9"/><path d="M10.4 3.6 L12.6 0.8 L15.6 3.4 V16 H10.4Z" fill="#3a78d8" stroke="#0a1a4a" stroke-width="0.9"/><path d="M2 6.6 L5 3.6 L7 5.4 M5.6 3.4 L9 1.6" fill="none" stroke="#111" stroke-width="1.4"/><path d="M12.4 2 v12" stroke="#a9d0ff" stroke-width="1"/></svg>
<svg class="a" style="left:1871px;top:215px;overflow:visible" width="18" height="15" viewBox="0 0 18 15" ><path d="M0.8 13.6 V2 H5.6 L7 3.6 H13 V6" fill="#f8e07a" stroke="#8a6a10" stroke-width="1"/><path d="M0.8 13.6 L4 6 H17 L13.4 13.6Z" fill="#fbe88a" stroke="#8a6a10" stroke-width="1"/><path d="M4.6 7 H15.6" stroke="#fff8c8" stroke-width="1"/></svg>
<svg class="a" style="left:1871px;top:238px;overflow:visible" width="17" height="18" viewBox="0 0 17 18" ><rect x="0.8" y="0.8" width="15" height="10.6" fill="#e6eaf6" stroke="#4a5a9a" stroke-width="1"/><rect x="2.4" y="2.6" width="5" height="2.4" fill="#f0d040"/><rect x="9" y="2.6" width="5.4" height="2.4" fill="#f0d040"/><path d="M4 8.6 h6.4l-1.4-2.2 h-3.6z" fill="#f0c020" stroke="#8a6a10" stroke-width="0.5"/><rect x="11.6" y="7" width="3" height="2.4" fill="#5a7ad0"/><path d="M0.8 14.6h7M5.6 12 L8.4 14.6 L5.6 17.2" fill="none" stroke="#0c1ec0" stroke-width="1.8"/></svg>
<svg class="a" style="left:1872px;top:263px;overflow:visible" width="16" height="17" viewBox="0 0 16 17" ><defs><clipPath id="sp2"><circle cx="8" cy="7.6" r="7.2"/></clipPath><radialGradient id="spg2" cx="0.4" cy="0.3" r="0.75"><stop offset="0" stop-color="#fff" stop-opacity="0.7"/><stop offset="0.4" stop-color="#fff" stop-opacity="0"/><stop offset="1" stop-color="#000" stop-opacity="0.3"/></radialGradient></defs>
<ellipse cx="8" cy="15.4" rx="5.4" ry="1.4" fill="#222" opacity="0.55"/><g clip-path="url(#sp2)"><rect width="16" height="16" fill="#e22"/><path d="M0 0H8V8H0Z" fill="#2a5ae0"/><path d="M0 8H8.6 L7 16H0Z" fill="#28b838"/><path d="M7 16 L8.6 8 L16 8.6 V16Z" fill="#f4d820"/></g><circle cx="8" cy="7.6" r="7.2" fill="url(#spg2)"/></svg>
<svg class="a" style="left:1871px;top:286px;overflow:visible" width="18" height="18" viewBox="0 0 18 18" ><path d="M2 5.6 H13 V16.6 H2Z" fill="#f4f4f0" stroke="#4a4a4a" stroke-width="1"/><path d="M4 9h7M4 11h7M4 13h7M4 15h7" stroke="#b0b0b0" stroke-width="0.8"/><path d="M3 6 L7.6 1.6 L12 6" fill="#f6efd8" stroke="#6a5a3a" stroke-width="0.8"/><path d="M9 2.6 q3.6-2.8 7.6-1 l-0.5 2.8 q-2.8-1-4.6 1z" fill="#f2c078" stroke="#8a5a2a" stroke-width="0.7"/></svg>
<div id="btabs" class="a"></div>
<div id="status" class="a"></div>
<div class="a" style="left:2px;top:1007px;width:66px;height:14.5px;background:#b4b6c4;border:1px solid #8f91a3;border-top:none"></div>
<div class="a" style="left:3.5px;top:1007.5px;width:15px;height:13px;background:linear-gradient(#cfd1db,#bfc1cd);border:1px solid #a9abba"></div>
<div class="a" style="left:19.5px;top:1007.5px;width:15px;height:13px;background:linear-gradient(#cfd1db,#bfc1cd);border:1px solid #a9abba"></div>
<div class="a" style="left:35.5px;top:1007.5px;width:15px;height:13px;background:linear-gradient(#cfd1db,#bfc1cd);border:1px solid #a9abba"></div>
<div class="a" style="left:51.5px;top:1007.5px;width:15px;height:13px;background:linear-gradient(#cfd1db,#bfc1cd);border:1px solid #a9abba"></div>
<svg class="a" style="left:3px;top:1007.5px" width="64" height="13" viewBox="0 0 64 13"><g fill="#9d9fae"><path d="M4 2.6h1.7v7.8H4zM11.4 2.6v7.8L6 6.5z"/><path d="M27 2.6v7.8L21.4 6.5z"/><path d="M37.4 2.6v7.8l5.6-3.9z"/><path d="M53 2.6v7.8l5.4-3.9zM59 2.6h1.7v7.8H59z"/></g></svg>
<div class="a" style="left:69px;top:1007px;width:54px;height:14.5px;background:linear-gradient(#fbfbfd,#e2e4ee);border:1px solid #8a8da6;border-top:none;box-shadow:0 1px 0 #fff"></div>
<div class="a" style="left:79.5px;top:1007.6px;font-size:12px;line-height:12px;font-weight:700;color:#111;letter-spacing:-0.33px;">Model</div>
<div class="a" style="left:123px;top:1007px;width:103px;height:14px;background:linear-gradient(#c3c6da,#b7bbd1);border:1px solid #4f5375;border-top:none"></div>
<div class="a" style="left:132.0px;top:1007.6px;font-size:12px;line-height:12px;color:#24273f;letter-spacing:-0.15px;">Motion Study 1</div>
<div class="a" style="left:2.0px;top:1025.8px;font-size:12px;line-height:12px;color:#111;letter-spacing:-0.18px;">SolidWorks Premium 2011 x64 Edition</div>
<div class="a" style="left:1733.0px;top:1025.8px;font-size:12px;line-height:12px;color:#111;letter-spacing:-0.09px;">Editing Part</div>
<div class="a" style="left:1720px;top:1025px;width:1px;height:14px;background:#aeb1c6;box-shadow:1px 0 0 #e6e8f2"></div>
<div class="a" style="left:1727px;top:1025px;width:1px;height:14px;background:#aeb1c6;box-shadow:1px 0 0 #e6e8f2"></div>
<div class="a" style="left:1801px;top:1025px;width:1px;height:14px;background:#aeb1c6;box-shadow:1px 0 0 #e6e8f2"></div>
<div class="a" style="left:1808px;top:1025px;width:1px;height:14px;background:#aeb1c6;box-shadow:1px 0 0 #e6e8f2"></div>
<div class="a" style="left:1814px;top:1025px;width:1px;height:14px;background:#aeb1c6;box-shadow:1px 0 0 #e6e8f2"></div>
<div class="a" style="left:1827px;top:1024px;width:13.5px;height:14px;background:#fff;border:1px solid #226622;box-shadow:1px 1px 0 #555"></div>
<div class="a" style="left:1830.3px;top:1025.3px;font-size:12px;line-height:12px;font-weight:700;color:#17a017;">?</div>
<div class="a" style="left:0px;top:1005px;width:1891px;height:2px;background:linear-gradient(#2a2a36,#15151f)"></div>
<div class="a" style="left:0px;top:1005px;width:187px;height:2px;background:#6f7288"></div>
<div class="a" style="left:0px;top:1003px;width:187px;height:1px;background:#a4a7bc"></div>
<svg class="a" style="left:1888px;top:1023px;overflow:visible" width="19" height="16" viewBox="0 0 19 16" ><path d="M1.6 9 L9.4 2.4 Q13.6 -0.4 16.4 2.8 Q18 5.6 15.6 8 L7 14.6 Q5.6 15.6 4.4 14Z" fill="#f0c21a" stroke="#7a5c00" stroke-width="1"/><circle cx="13.6" cy="4.8" r="1.7" fill="#fff" stroke="#7a5c00" stroke-width="0.8"/><path d="M3.6 9.6 L10 4.4 M5 11.4 L11.4 6.2" stroke="#fbe98a" stroke-width="1"/></svg>
</body></html>
